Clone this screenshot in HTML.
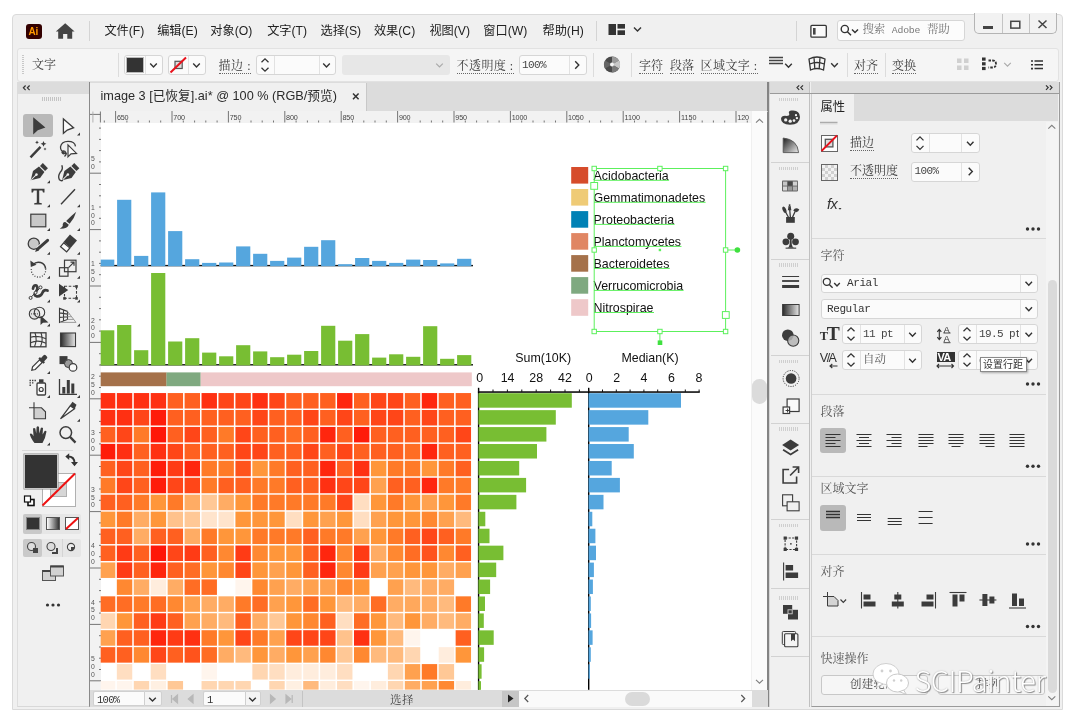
<!DOCTYPE html>
<html lang="zh-CN"><head><meta charset="utf-8"><title>image 3 [已恢复].ai* @ 100 % (RGB/预览)</title>
<style>
*{box-sizing:border-box;margin:0;padding:0}
html,body{width:1080px;height:727px;overflow:hidden;background:#fff}
body{position:relative;font-family:"Liberation Sans","Noto Sans CJK SC",sans-serif;color:#333;font-size:13px}
.a{position:absolute}
.win{left:12px;top:14px;width:1051px;height:696px;background:#f0f0f0;border:1px solid #dadada;border-radius:4px 4px 0 0}
.t{position:absolute;white-space:nowrap;line-height:1}
.ui{font-family:"Liberation Sans","Noto Sans CJK SC",sans-serif;color:#2c2c2c}
.sf{font-family:"Liberation Serif","Noto Serif CJK SC",serif;color:#3a3a3a}
.mono{font-family:"Liberation Mono","Noto Serif CJK SC",monospace;color:#3a3a3a}
.ar{font-family:"Liberation Sans",sans-serif;color:#1a1a1a}
.box{position:absolute;background:#fbfbfb;border:1px solid #d6d6d6;border-radius:3px}
.vsep{position:absolute;width:1px;background:#d4d4d4}
.hsep{position:absolute;height:1px;background:#d9d9d9}
.ul{border-bottom:1px dotted #666}
svg{position:absolute;overflow:visible}
.dots{position:absolute;color:#333;font-size:9px;letter-spacing:1px;line-height:1}
</style></head><body>
<div class="a" style="left:0;top:0;width:1080px;height:727px;will-change:transform">
<div class="a win"></div>

<div class="a" style="left:26px;top:24px;width:16px;height:15px;background:#300;border-radius:3px"></div>
<div class="t ar" style="left:28.5px;top:26.5px;font-size:10px;color:#ff9a00;font-weight:bold;letter-spacing:-0.3px">Ai</div>
<svg style="left:0;top:0;" width="1" height="1"><path d="M65.2 23.2 L74.6 31.6 L72.2 31.6 L72.2 38.8 L67.3 38.8 L67.3 34 L63.1 34 L63.1 38.8 L58.2 38.8 L58.2 31.6 L55.8 31.6 Z" fill="#444"/></svg>
<div class="vsep" style="left:89px;top:21px;height:20px;background:#d4d4d4"></div>
<div class="t ui" style="left:104.4px;top:24.6px;font-size:12.2px;color:#222">文件(F)</div>
<div class="t ui" style="left:157.2px;top:24.6px;font-size:12.2px;color:#222">编辑(E)</div>
<div class="t ui" style="left:210.3px;top:24.6px;font-size:12.2px;color:#222">对象(O)</div>
<div class="t ui" style="left:267.2px;top:24.6px;font-size:12.2px;color:#222">文字(T)</div>
<div class="t ui" style="left:320.5px;top:24.6px;font-size:12.2px;color:#222">选择(S)</div>
<div class="t ui" style="left:373.9px;top:24.6px;font-size:12.2px;color:#222">效果(C)</div>
<div class="t ui" style="left:429.4px;top:24.6px;font-size:12.2px;color:#222">视图(V)</div>
<div class="t ui" style="left:483.3px;top:24.6px;font-size:12.2px;color:#222">窗口(W)</div>
<div class="t ui" style="left:542.5px;top:24.6px;font-size:12.2px;color:#222">帮助(H)</div>
<div class="vsep" style="left:596px;top:21px;height:20px;background:#d4d4d4"></div>
<svg style="left:0;top:0;" width="1" height="1"><rect x="608.5" y="24" width="7.5" height="11" fill="#333"/><rect x="617.5" y="24" width="7.5" height="4.6" fill="#333"/><rect x="617.5" y="30.3" width="7.5" height="4.7" fill="#333"/></svg>
<svg style="left:0;top:0" width="1" height="1"><path d="M634.0 27.5 L637.5 31.1 L641.0 27.5" fill="none" stroke="#333" stroke-width="1.4"/></svg>
<div class="vsep" style="left:796px;top:21px;height:20px;background:#d4d4d4"></div>
<svg style="left:0;top:0;" width="1" height="1"><rect x="810.9" y="25.4" width="15.4" height="11.8" rx="1" fill="#fafafa" stroke="#333" stroke-width="1.3"/><rect x="813" y="28" width="2.6" height="6.6" fill="#444"/></svg>
<div class="box" style="left:836.5px;top:20px;width:128.5px;height:20.5px;background:#fcfcfc"></div>
<svg style="left:0;top:0;" width="1" height="1"><circle cx="844.8" cy="29" r="3.6" fill="none" stroke="#333" stroke-width="1.4"/><path d="M847.4 31.8 L851 35.3" stroke="#333" stroke-width="1.5"/></svg>
<svg style="left:0;top:0" width="1" height="1"><path d="M852.0 29.4 L855.0 32.6 L858.0 29.4" fill="none" stroke="#333" stroke-width="1.4"/></svg>
<div class="t mono" style="left:862.5px;top:23.5px;font-size:11.5px;color:#777;letter-spacing:-0.2px">搜索 <span style="font-size:9.8px">Adobe</span> 帮助</div>
<div class="a" style="left:974px;top:13px;width:83px;height:21px;border:1px solid #b4b4b4;border-top:none;border-radius:0 0 5px 5px;background:#f2f2f2"></div>
<div class="vsep" style="left:1001.5px;top:14px;height:19px;background:#c4c4c4"></div>
<div class="vsep" style="left:1028.5px;top:14px;height:19px;background:#c4c4c4"></div>
<div class="a" style="left:983px;top:26px;width:10px;height:2.5px;background:#444;"></div>
<svg style="left:0;top:0;" width="1" height="1"><rect x="1010.8" y="21.3" width="9" height="6.8" fill="none" stroke="#444" stroke-width="1.5"/></svg>
<svg style="left:0;top:0;" width="1" height="1"><path d="M1038.5 20.5 L1046.5 28 M1046.5 20.5 L1038.5 28" stroke="#444" stroke-width="1.5"/></svg>
<div class="a" style="left:17px;top:48px;width:1042px;height:34px;background:#f5f5f5;border:1px solid #e2e2e2;border-radius:3px"></div>
<div class="a" style="left:22px;top:55px;width:2px;height:19px;background:repeating-linear-gradient(#c8c8c8 0 1px,transparent 1px 2px)"></div>
<div class="t sf" style="left:32px;top:59px;font-size:12px;color:#444">文字</div>
<div class="vsep" style="left:118px;top:53px;height:24px;background:#dcdcdc"></div>
<div class="box" style="left:124px;top:55px;width:39px;height:20px;"></div>
<div class="a" style="left:126px;top:57px;width:17.5px;height:16px;background:#333;border:1px solid #bbb"></div>
<div class="vsep" style="left:144.5px;top:56px;height:18px;background:#e2e2e2"></div>
<svg style="left:0;top:0" width="1" height="1"><path d="M150.2 63.6 L153.5 67.0 L156.8 63.6" fill="none" stroke="#333" stroke-width="1.4"/></svg>
<div class="box" style="left:167.5px;top:55px;width:38.5px;height:20px;"></div>
<svg style="left:0;top:0;" width="1" height="1"><rect x="175" y="61.3" width="7.2" height="7.2" fill="#ddd" stroke="#555" stroke-width="1.2"/><path d="M170.5 72.5 L186 57.5" stroke="#e8121c" stroke-width="2"/></svg>
<div class="vsep" style="left:187.5px;top:56px;height:18px;background:#e2e2e2"></div>
<svg style="left:0;top:0" width="1" height="1"><path d="M193.2 63.6 L196.5 67.0 L199.8 63.6" fill="none" stroke="#333" stroke-width="1.4"/></svg>
<div class="t sf" style="left:218.5px;top:59.7px;font-size:12px;letter-spacing:0.6px"><span class="ul">描边 :</span></div>
<div class="box" style="left:256px;top:55px;width:80px;height:20px;"></div>
<div class="vsep" style="left:273.5px;top:56px;height:18px;background:#e2e2e2"></div>
<div class="vsep" style="left:318.5px;top:56px;height:18px;background:#e2e2e2"></div>
<svg style="left:0;top:0" width="1" height="1"><path d="M261.5 62.2 L265.0 58.8 L268.5 62.2" fill="none" stroke="#333" stroke-width="1.3"/></svg><svg style="left:0;top:0" width="1" height="1"><path d="M261.5 67.8 L265.0 71.2 L268.5 67.8" fill="none" stroke="#333" stroke-width="1.3"/></svg>
<svg style="left:0;top:0" width="1" height="1"><path d="M323.2 63.6 L326.5 67.0 L329.8 63.6" fill="none" stroke="#333" stroke-width="1.4"/></svg>
<div class="a" style="left:341.5px;top:55px;width:108px;height:20px;background:#e7e7e7;border-radius:3px"></div>
<svg style="left:0;top:0" width="1" height="1"><path d="M436.2 63.6 L439.5 67.0 L442.8 63.6" fill="none" stroke="#aaa" stroke-width="1.2"/></svg>
<div class="t sf" style="left:456.5px;top:59.7px;font-size:12px;letter-spacing:0.45px"><span class="ul">不透明度 :</span></div>
<div class="box" style="left:518.5px;top:55px;width:68px;height:20px;"></div>
<div class="vsep" style="left:568.5px;top:56px;height:18px;background:#e2e2e2"></div>
<div class="t mono" style="left:522px;top:60px;font-size:11px;letter-spacing:-0.6px;color:#444">100%</div>
<svg style="left:0;top:0" width="1" height="1"><path d="M575.2 61.2 L578.8 65.0 L575.2 68.8" fill="none" stroke="#333" stroke-width="1.4"/></svg>
<div class="vsep" style="left:593px;top:53px;height:24px;background:#dcdcdc"></div>
<svg style="left:0;top:0;" width="1" height="1"><circle cx="612" cy="64.5" r="8" fill="#4a4a4a"/><path d="M612 64.5 L612 56.5 A8 8 0 0 1 618.9 60.5 Z" fill="#9a9a9a"/><path d="M612 64.5 L618.9 60.5 A8 8 0 0 1 618.9 68.5 Z" fill="#c8c8c8"/><path d="M612 64.5 L618.9 68.5 A8 8 0 0 1 612 72.5 Z" fill="#7a7a7a"/><path d="M612 64.5 L605.1 68.5 A8 8 0 0 1 605.1 60.5 Z" fill="#666"/><circle cx="612" cy="64.5" r="2" fill="#f5f5f5"/></svg>
<div class="vsep" style="left:631px;top:53px;height:24px;background:#dcdcdc"></div>
<div class="t sf" style="left:639px;top:59.7px;font-size:12px;"><span class="ul">字符</span></div>
<div class="t sf" style="left:670px;top:59.7px;font-size:12px;"><span class="ul">段落</span></div>
<div class="t sf" style="left:700.5px;top:59.7px;font-size:12px;letter-spacing:0.45px"><span class="ul">区域文字 :</span></div>
<svg style="left:0;top:0;" width="1" height="1"><path d="M769 57.5 H783 M769 60.5 H783 M769 63.5 H783" stroke="#444" stroke-width="1.3"/></svg>
<svg style="left:0;top:0" width="1" height="1"><path d="M785.2 63.8 L788.5 67.2 L791.8 63.8" fill="none" stroke="#333" stroke-width="1.4"/></svg>
<svg style="left:0;top:0;" width="1" height="1"><path d="M809 59 Q817 55 825 59 L823.5 70 Q817 67 810.5 70 Z M814 57.3 L814.8 68.5 M820 57.3 L819.2 68.5 M809.8 64 Q817 61 824.2 64" fill="none" stroke="#333" stroke-width="1.3"/></svg>
<svg style="left:0;top:0" width="1" height="1"><path d="M831.2 63.3 L834.5 66.7 L837.8 63.3" fill="none" stroke="#333" stroke-width="1.4"/></svg>
<div class="vsep" style="left:846.5px;top:53px;height:24px;background:#dcdcdc"></div>
<div class="t sf" style="left:854px;top:59.7px;font-size:12px;"><span class="ul">对齐</span></div>
<div class="vsep" style="left:884.5px;top:53px;height:24px;background:#dcdcdc"></div>
<div class="t sf" style="left:892px;top:59.7px;font-size:12px;"><span class="ul">变换</span></div>
<svg style="left:0;top:0;" width="1" height="1"><rect x="957" y="58.5" width="4.5" height="4.5" fill="#d0d0d0"/><rect x="964" y="58.5" width="4.5" height="4.5" fill="#d0d0d0"/><rect x="957" y="65.5" width="4.5" height="4.5" fill="#d0d0d0"/><rect x="964" y="65.5" width="4.5" height="4.5" fill="#d0d0d0"/></svg>
<svg style="left:0;top:0;" width="1" height="1"><rect x="982" y="57.5" width="3.6" height="3.2" fill="#333"/><rect x="982" y="62.2" width="3.6" height="3.2" fill="#333"/><rect x="982" y="66.9" width="3.6" height="3.2" fill="#333"/><path d="M988.5 60.5 H992.5 Q996 60.5 996 64 Q996 67.5 992.5 67.5 H988.5" fill="none" stroke="#333" stroke-width="1.8" stroke-dasharray="2.5 1.2"/></svg>
<svg style="left:0;top:0" width="1" height="1"><path d="M1004.2 62.8 L1007.5 66.2 L1010.8 62.8" fill="none" stroke="#aaa" stroke-width="1.1"/></svg>
<svg style="left:0;top:0;" width="1" height="1"><path d="M1034.5 61 H1043 M1034.5 64.8 H1043 M1034.5 68.6 H1043" stroke="#333" stroke-width="1.5"/><path d="M1031 61 H1033 M1031 64.8 H1033 M1031 68.6 H1033" stroke="#333" stroke-width="1.6"/></svg>
<div class="a" style="left:17px;top:82px;width:71.5px;height:624.5px;background:#f0f0f0;border-left:1px solid #dedede;border-bottom:1px solid #d8d8d8"></div>
<div class="a" style="left:17px;top:82px;width:71.5px;height:12px;background:#dcdcdc;"></div>
<svg style="left:0;top:0;" width="1" height="1"><path d="M25.6 85.5 L23.4 87.8 L25.6 90.1 M29.6 85.5 L27.4 87.8 L29.6 90.1" fill="none" stroke="#333" stroke-width="1.2"/></svg>
<div class="a" style="left:42px;top:97px;width:19px;height:4px;background:repeating-linear-gradient(90deg,#c4c4c4 0 1px,transparent 1px 2px)"></div>
<div class="a" style="left:23px;top:113.5px;width:29.5px;height:23.5px;background:#b9b9b9;border-radius:3px"></div>
<svg style="left:0;top:0;" width="1" height="1"><path d="M33.2 117.3 L33.2 134.5 L37.8 130.29999999999998 L45.4 127.39999999999999 Z" fill="#3c3c3c"/><path d="M63.4 118.89999999999999 L63.4 133.29999999999998 L67.3 130.1 L73.6 127.69999999999999 Z" fill="#fafafa" stroke="#3c3c3c" stroke-width="1.3" stroke-linejoin="miter"/><path d="M80 132.6 L80 135.6 L77 135.6 Z" fill="#3c3c3c"/><path d="M30.5 157.4 L40.5 146.9" stroke="#3c3c3c" stroke-width="2.4"/><path d="M43.5 140.9 l0.9 2 2 0.9 -2 0.9 -0.9 2 -0.9 -2 -2 -0.9 2 -0.9z M37 140.4 l0.6 1.3 1.3 0.6 -1.3 0.6 -0.6 1.3 -0.6 -1.3 -1.3 -0.6 1.3 -0.6z M45 147.4 l0.5 1 1 0.5 -1 0.5 -0.5 1 -0.5 -1 -1 -0.5 1 -0.5z" fill="#3c3c3c"/><path d="M67 153.9 Q60 151.9 60.5 146.9 Q61.5 141.4 68 141.4 Q75 141.4 75.5 146.4 M64.5 156.4 Q67.5 153.9 65 151.4 Q62.5 149.9 62 152.4 Q62.5 154.4 65 153.4" fill="none" stroke="#3c3c3c" stroke-width="1.3"/><path d="M68 144.9 L68 156.9 L71 153.9 L76.5 153.4 Z" fill="#fafafa" stroke="#3c3c3c" stroke-width="1.2"/><g transform="translate(37.6 173.4) rotate(45)"><path d="M-3.6 -11 H3.6 V-7 H-3.6 Z" fill="#3c3c3c"/><path d="M-3.8 -5.8 H3.8 L5 1.5 L0 9.8 L-5 1.5 Z" fill="#3c3c3c"/><path d="M0 9 V2.5" stroke="#f0f0f0" stroke-width="1"/><circle cx="0" cy="1.6" r="1.3" fill="#f0f0f0"/></g><path d="M50 180.3 L50 183.3 L47 183.3 Z" fill="#3c3c3c"/><g transform="translate(69 173.4) rotate(45)"><path d="M-3.6 -11 H3.6 V-7 H-3.6 Z" fill="#3c3c3c"/><path d="M-3.8 -5.8 H3.8 L5 1.5 L0 9.8 L-5 1.5 Z" fill="#3c3c3c"/><path d="M0 9 V2.5" stroke="#f0f0f0" stroke-width="1"/><circle cx="0" cy="1.6" r="1.3" fill="#f0f0f0"/></g><path d="M61.8 165.3 Q63.5 169.3 60.2 172.3 Q57.5 176.3 59.5 179.8 Q61 181.3 63 180.3" fill="none" stroke="#3c3c3c" stroke-width="1.4"/><path d="M31.5 188.7 H44.5 V192.5 H43 L42.3 190.39999999999998 H39.2 V202.7 L41.8 203.29999999999998 V204.5 H34.2 V203.29999999999998 L36.8 202.7 V190.39999999999998 H33.7 L33 192.5 H31.5 Z" fill="#3c3c3c"/><path d="M50 204.2 L50 207.2 L47 207.2 Z" fill="#3c3c3c"/><path d="M61 204.2 L75 189.2" stroke="#3c3c3c" stroke-width="1.4"/><path d="M80 204.2 L80 207.2 L77 207.2 Z" fill="#3c3c3c"/><rect x="30.8" y="214.2" width="15" height="12.6" fill="#c8c8c8" stroke="#3c3c3c" stroke-width="1.2"/><path d="M50 228.0 L50 231.0 L47 231.0 Z" fill="#3c3c3c"/><path d="M76.2 211.7 Q70.5 216.3 66.2 221.1 L69.6 223.8 Q74.6 218.0 76.2 211.7 Z" fill="#3c3c3c"/><path d="M65.3 222.0 L68.8 224.8 Q67.6 229.0 59.8 228.8 Q63.6 226.5 62.7 224.3 Q63.3 221.6 65.3 222.0 Z" fill="#3c3c3c"/><path d="M80 228.0 L80 231.0 L77 231.0 Z" fill="#3c3c3c"/><circle cx="33.8" cy="243.70000000000002" r="5.6" fill="#c8c8c8" stroke="#3c3c3c" stroke-width="1.3"/><path d="M47.6 240.3 L37.4 249.3" stroke="#f0f0f0" stroke-width="4.6"/><path d="M47.6 240.3 L37.6 249.10000000000002" stroke="#3c3c3c" stroke-width="3" stroke-linecap="round"/><path d="M36.4 247.60000000000002 L39 250.4 L35.2 251.9 Z" fill="#3c3c3c"/><path d="M50 251.8 L50 254.8 L47 254.8 Z" fill="#3c3c3c"/><g transform="translate(68.2 243.70000000000002) rotate(40)"><rect x="-4.6" y="-8.2" width="9.2" height="10" fill="#3c3c3c"/><rect x="-4" y="2.2" width="8" height="5" fill="#fafafa" stroke="#3c3c3c" stroke-width="1.2"/></g><path d="M80 251.8 L80 254.8 L77 254.8 Z" fill="#3c3c3c"/><path d="M33 264.7 A7.2 7.2 0 0 1 45.6 268.7" fill="none" stroke="#3c3c3c" stroke-width="1.5"/><path d="M45.6 268.7 A7.2 7.2 0 1 1 31.4 268.7" fill="none" stroke="#3c3c3c" stroke-width="1.2" stroke-dasharray="1 1.6"/><path d="M30.3 260.4 L30.8 267.0 L36.5 264.7 Z" fill="#3c3c3c"/><path d="M50 275.7 L50 278.7 L47 278.7 Z" fill="#3c3c3c"/><rect x="59.5" y="267.7" width="8.5" height="8.5" fill="none" stroke="#3c3c3c" stroke-width="1.2"/><rect x="64.5" y="260.2" width="11.5" height="11.5" fill="none" stroke="#3c3c3c" stroke-width="1.2"/><path d="M68.5 267.7 L73.5 262.7 M70.5 262.2 H74 V265.7" fill="none" stroke="#3c3c3c" stroke-width="1.2"/><path d="M80 275.7 L80 278.7 L77 278.7 Z" fill="#3c3c3c"/><path d="M30.6 297.70000000000005 L40.4 287.5" stroke="#3c3c3c" stroke-width="1" fill="none"/><path d="M33 288.6 Q33.5 284.6 36.5 285.6 Q38.5 288.1 36 291.6 Q33 295.1 36.5 296.3 Q41 296.90000000000003 42.5 292.6 Q44 289.1 47.5 290.6" fill="none" stroke="#3c3c3c" stroke-width="2.7" stroke-linecap="round"/><circle cx="30.6" cy="297.90000000000003" r="1.5" fill="#f0f0f0" stroke="#3c3c3c" stroke-width="1"/><circle cx="40.5" cy="287.40000000000003" r="1.5" fill="#f0f0f0" stroke="#3c3c3c" stroke-width="1"/><circle cx="35.6" cy="292.70000000000005" r="1.4" fill="#f0f0f0" stroke="#3c3c3c" stroke-width="0.9"/><path d="M50 299.6 L50 302.6 L47 302.6 Z" fill="#3c3c3c"/><rect x="64.5" y="286.3" width="12" height="12" fill="none" stroke="#3c3c3c" stroke-width="1.1" stroke-dasharray="2.6 1.6"/><rect x="75.2" y="285.1" width="2.6" height="2.6" fill="#3c3c3c"/><rect x="75.2" y="297.1" width="2.6" height="2.6" fill="#3c3c3c"/><rect x="63.2" y="297.1" width="2.6" height="2.6" fill="#3c3c3c"/><path d="M59 283.70000000000005 L59 296.5 L68.2 290.1 Z" fill="#3c3c3c"/><path d="M80 299.6 L80 302.6 L77 302.6 Z" fill="#3c3c3c"/><circle cx="34.5" cy="313.9" r="5.2" fill="#e2e2e2" stroke="#3c3c3c" stroke-width="1.1"/><circle cx="39.5" cy="312.4" r="5.2" fill="none" stroke="#3c3c3c" stroke-width="1.1"/><path d="M31 313.9 H38" stroke="#3c3c3c" stroke-width="1" stroke-dasharray="1 1"/><path d="M40.5 315.4 L40.5 324.9 L43 322.7 L48.5 322.4 Z" fill="#3c3c3c"/><path d="M50 323.4 L50 326.4 L47 326.4 Z" fill="#3c3c3c"/><path d="M59.5 308.4 V322.4 L67.5 319.4 V311.4 Z M59.5 312.9 L67.5 314.09999999999997 M59.5 317.4 L67.5 316.7 M63.5 309.9 V320.9" fill="none" stroke="#3c3c3c" stroke-width="1.1"/><path d="M67.5 311.4 L76 322.4 M67.5 319.4 H74 M67.5 316.7 H72 M67.5 314.09999999999997 H70 M60 322.4 H76" fill="none" stroke="#9a9a9a" stroke-width="1"/><path d="M80 323.4 L80 326.4 L77 326.4 Z" fill="#3c3c3c"/><rect x="30.5" y="332.8" width="15.5" height="14" fill="none" stroke="#3c3c3c" stroke-width="1.3"/><path d="M30.5 337.3 Q38 334.8 46 338.8 M30.5 342.8 Q38 339.3 46 343.3 M35 332.8 Q37.5 339.8 34.5 346.8 M41 332.8 Q43.5 339.8 40.5 346.8" fill="none" stroke="#3c3c3c" stroke-width="1.1"/><defs><linearGradient id="tg1" x1="0" x2="1"><stop offset="0" stop-color="#2a2a2a"/><stop offset="1" stop-color="#e8e8e8"/></linearGradient></defs><rect x="60.5" y="333.0" width="15" height="13.6" fill="url(#tg1)" stroke="#3c3c3c" stroke-width="1.1"/><g transform="translate(38.5 363.6) rotate(45)"><rect x="-2.3" y="-11" width="4.6" height="6" rx="1.5" fill="#3c3c3c"/><rect x="-3.6" y="-5.6" width="7.2" height="2.2" fill="#3c3c3c"/><path d="M-1.9 -3.4 V6.5 L0 9.5 L1.9 6.5 V-3.4 Z" fill="#fafafa" stroke="#3c3c3c" stroke-width="1.2"/></g><path d="M50 371.1 L50 374.1 L47 374.1 Z" fill="#3c3c3c"/><rect x="59.5" y="356.1" width="8" height="8" fill="#3c3c3c"/><circle cx="68.5" cy="363.6" r="4" fill="#9a9a9a" stroke="#3c3c3c" stroke-width="1"/><circle cx="73" cy="367.40000000000003" r="3.8" fill="#fafafa" stroke="#3c3c3c" stroke-width="1.2"/><rect x="37" y="383.0" width="8.5" height="12" rx="1" fill="#fafafa" stroke="#3c3c3c" stroke-width="1.3"/><rect x="39" y="379.3" width="4.5" height="3.4" fill="#3c3c3c"/><circle cx="41.2" cy="389.5" r="2" fill="none" stroke="#3c3c3c" stroke-width="1.2"/><path d="M29.5 380.5 h1.4 M32 380.5 h1.4 M34.5 380.5 h1.4 M29.5 382.9 h1.4 M32 382.9 h1.4 M29.5 385.3 h1.4" stroke="#3c3c3c" stroke-width="1.4"/><path d="M50 395.0 L50 398.0 L47 398.0 Z" fill="#3c3c3c"/><path d="M59.5 379.0 V394.3 H77" fill="none" stroke="#3c3c3c" stroke-width="1.3"/><rect x="62.3" y="387.0" width="3" height="6.6" fill="#3c3c3c"/><rect x="66.8" y="380.0" width="3" height="13.6" fill="#3c3c3c"/><rect x="71.3" y="383.5" width="3" height="10.1" fill="#3c3c3c"/><path d="M80 395.0 L80 398.0 L77 398.0 Z" fill="#3c3c3c"/><path d="M34 407.8 H41.5 L45.5 411.8 V418.8 H34 Z" fill="#d0d0d0" stroke="#3c3c3c" stroke-width="1.1"/><path d="M29 407.8 H34 M34 402.3 V407.8" stroke="#3c3c3c" stroke-width="1.1"/><path d="M60.5 418.8 L70.2 405.8 L74.5 408.8 Z" fill="#fafafa" stroke="#3c3c3c" stroke-width="1.3"/><path d="M69.8 405.5 L72.5 401.8 L76.5 404.8 L74.6 408.90000000000003 Z" fill="#3c3c3c"/><path d="M80 418.8 L80 421.8 L77 421.8 Z" fill="#3c3c3c"/><path d="M34.5 443.1 Q30.5 438.1 29.8 434.1 Q31 432.90000000000003 32.5 434.6 L33.5 436.3 L33 428.6 Q34.2 427.3 35.3 428.6 L36.2 433.6 L36.6 426.90000000000003 Q37.9 425.6 39 426.90000000000003 L39.4 433.6 L40.8 427.90000000000003 Q42 426.90000000000003 43 428.1 L42.6 434.6 L44.6 430.90000000000003 Q45.8 430.3 46.5 431.5 Q45.5 438.1 42.5 443.1 Z" fill="#3c3c3c"/><path d="M50 442.6 L50 445.6 L47 445.6 Z" fill="#3c3c3c"/><circle cx="65.8" cy="432.6" r="5.8" fill="none" stroke="#3c3c3c" stroke-width="1.5"/><path d="M70 436.90000000000003 L75.5 442.6" stroke="#3c3c3c" stroke-width="2.3"/></svg>
<div class="hsep" style="left:22px;top:449.5px;width:51px;background:#dadada"></div>
<div class="a" style="left:41.5px;top:472.5px;width:34.5px;height:34px;background:#fff;border:1px solid #b0b0b0"></div>
<div class="a" style="left:50px;top:481.5px;width:16.5px;height:15.5px;background:#d6d6d6;border:1px solid #b0b0b0"></div>
<svg style="left:0;top:0;" width="1" height="1"><path d="M42.5 505.5 L75 473.5" stroke="#ee1111" stroke-width="2"/></svg>
<div class="a" style="left:23.5px;top:454px;width:34.5px;height:35px;background:#333;border:1px solid #c8c8c8;box-shadow:0 0 0 0.5px #888"></div>
<svg style="left:0;top:0;" width="1" height="1"><path d="M68 456.5 Q74.5 456.5 74.5 463" fill="none" stroke="#333" stroke-width="1.8"/><path d="M69.2 453.2 L65.3 456.6 L69.2 460 Z M71 462 L74.5 466.2 L78 462 Z" fill="#333"/></svg>
<svg style="left:0;top:0;" width="1" height="1"><rect x="28" y="499.5" width="6" height="6" fill="#fff" stroke="#111" stroke-width="1.6"/><rect x="24.5" y="496" width="6" height="6" fill="#fff" stroke="#111" stroke-width="1.2"/></svg>
<div class="a" style="left:23px;top:513.5px;width:57.5px;height:20px;background:#e6e6e6;border-radius:2px"></div>
<div class="a" style="left:23px;top:513.5px;width:19px;height:20px;background:#c9c9c9;border-radius:2px"></div>
<div class="a" style="left:26px;top:517px;width:14px;height:13px;background:#333;border:1px solid #888"></div>
<div class="a" style="left:45.5px;top:517px;width:14px;height:13px;background:linear-gradient(90deg,#fff,#333);border:1px solid #555"></div>
<div class="a" style="left:65px;top:517px;width:14px;height:13px;background:#fff;border:1px solid #555"></div>
<svg style="left:0;top:0;" width="1" height="1"><path d="M66 529 L78 518" stroke="#ee1111" stroke-width="2"/></svg>
<div class="a" style="left:23px;top:538.5px;width:57.5px;height:18.5px;background:#e6e6e6;border-radius:2px"></div>
<div class="a" style="left:23px;top:538.5px;width:19px;height:18.5px;background:#c9c9c9;border-radius:2px"></div>
<div class="vsep" style="left:61.5px;top:539px;height:17.5px;background:#d4d4d4"></div>
<svg style="left:0;top:0;" width="1" height="1"><circle cx="31.5" cy="546.5" r="4" fill="#ddd" stroke="#444" stroke-width="1.1"/><rect x="33" y="548" width="5" height="5" fill="#444"/><circle cx="51" cy="546.5" r="4" fill="#ddd" stroke="#444" stroke-width="1.1"/><path d="M52 553 H57 V548" fill="none" stroke="#444" stroke-width="2"/><circle cx="71" cy="547" r="3.6" fill="#eee" stroke="#444" stroke-width="1.1"/><path d="M71 547 h3.4 a3.4 3.4 0 0 1 -3.4 3.4z" fill="#444"/></svg>
<svg style="left:0;top:0;" width="1" height="1"><rect x="42.5" y="570.5" width="13" height="10" fill="#d2d2d2" stroke="#555" stroke-width="1"/><rect x="42.5" y="570" width="13" height="2" fill="#444"/><rect x="50.5" y="566" width="13" height="10" fill="#d2d2d2" stroke="#555" stroke-width="1"/><rect x="50.5" y="565.5" width="13" height="2" fill="#444"/></svg>
<svg style="left:0;top:0;" width="1" height="1"><circle cx="47.5" cy="605" r="1.6" fill="#333"/><circle cx="53" cy="605" r="1.6" fill="#333"/><circle cx="58.5" cy="605" r="1.6" fill="#333"/></svg>
<div class="a" style="left:88.5px;top:82px;width:680.5px;height:625px;background:#dcdcdc;border-left:1.5px solid #8a8a8a;border-right:2px solid #848484;border-bottom:1px solid #b4b4b4"></div>
<div class="a" style="left:90px;top:83px;width:276.5px;height:28px;background:#f0f0f0;border-right:1px solid #c8c8c8"></div>
<div class="t ui" style="left:100.5px;top:89.5px;font-size:12.7px;color:#2a2a2a">image 3 [已恢复].ai* @ 100 % (RGB/预览)</div>
<svg style="left:0;top:0;" width="1" height="1"><path d="M353 93.5 L358.6 99.2 M358.6 93.5 L353 99.2" stroke="#333" stroke-width="1.5"/></svg>
<div class="hsep" style="left:90px;top:110.5px;width:678px;background:#c4c4c4"></div>
<div class="a" style="left:90px;top:111px;width:662px;height:11.8px;background:#f2f2f2;"></div>
<div class="a" style="left:90px;top:111px;width:11px;height:579.5px;background:#f2f2f2;"></div>
<div class="a" style="left:101px;top:122.5px;width:651px;height:567.5px;background:#fff;"></div>
<svg style="left:0;top:0;" width="1" height="1"><path d="M90 114.4 H100.4 M100.4 111.5 V122.5" stroke="#666" stroke-width="0.9" fill="none"/><path d="M92.9 111.5 V122.5" stroke="#aaa" stroke-width="0.9" fill="none"/><path d="M104.3 120.5 V122.5" stroke="#555" stroke-width="0.8"/><path d="M115.6 111 V122.5" stroke="#555" stroke-width="0.8"/><path d="M126.9 120.5 V122.5" stroke="#555" stroke-width="0.8"/><path d="M138.2 120.5 V122.5" stroke="#555" stroke-width="0.8"/><path d="M149.4 120.5 V122.5" stroke="#555" stroke-width="0.8"/><path d="M160.7 120.5 V122.5" stroke="#555" stroke-width="0.8"/><path d="M172.0 111 V122.5" stroke="#555" stroke-width="0.8"/><path d="M183.3 120.5 V122.5" stroke="#555" stroke-width="0.8"/><path d="M194.6 120.5 V122.5" stroke="#555" stroke-width="0.8"/><path d="M205.8 120.5 V122.5" stroke="#555" stroke-width="0.8"/><path d="M217.1 120.5 V122.5" stroke="#555" stroke-width="0.8"/><path d="M228.4 111 V122.5" stroke="#555" stroke-width="0.8"/><path d="M239.7 120.5 V122.5" stroke="#555" stroke-width="0.8"/><path d="M251.0 120.5 V122.5" stroke="#555" stroke-width="0.8"/><path d="M262.2 120.5 V122.5" stroke="#555" stroke-width="0.8"/><path d="M273.5 120.5 V122.5" stroke="#555" stroke-width="0.8"/><path d="M284.8 111 V122.5" stroke="#555" stroke-width="0.8"/><path d="M296.1 120.5 V122.5" stroke="#555" stroke-width="0.8"/><path d="M307.4 120.5 V122.5" stroke="#555" stroke-width="0.8"/><path d="M318.6 120.5 V122.5" stroke="#555" stroke-width="0.8"/><path d="M329.9 120.5 V122.5" stroke="#555" stroke-width="0.8"/><path d="M341.2 111 V122.5" stroke="#555" stroke-width="0.8"/><path d="M352.5 120.5 V122.5" stroke="#555" stroke-width="0.8"/><path d="M363.8 120.5 V122.5" stroke="#555" stroke-width="0.8"/><path d="M375.0 120.5 V122.5" stroke="#555" stroke-width="0.8"/><path d="M386.3 120.5 V122.5" stroke="#555" stroke-width="0.8"/><path d="M397.6 111 V122.5" stroke="#555" stroke-width="0.8"/><path d="M408.9 120.5 V122.5" stroke="#555" stroke-width="0.8"/><path d="M420.2 120.5 V122.5" stroke="#555" stroke-width="0.8"/><path d="M431.4 120.5 V122.5" stroke="#555" stroke-width="0.8"/><path d="M442.7 120.5 V122.5" stroke="#555" stroke-width="0.8"/><path d="M454.0 111 V122.5" stroke="#555" stroke-width="0.8"/><path d="M465.3 120.5 V122.5" stroke="#555" stroke-width="0.8"/><path d="M476.6 120.5 V122.5" stroke="#555" stroke-width="0.8"/><path d="M487.8 120.5 V122.5" stroke="#555" stroke-width="0.8"/><path d="M499.1 120.5 V122.5" stroke="#555" stroke-width="0.8"/><path d="M510.4 111 V122.5" stroke="#555" stroke-width="0.8"/><path d="M521.7 120.5 V122.5" stroke="#555" stroke-width="0.8"/><path d="M533.0 120.5 V122.5" stroke="#555" stroke-width="0.8"/><path d="M544.2 120.5 V122.5" stroke="#555" stroke-width="0.8"/><path d="M555.5 120.5 V122.5" stroke="#555" stroke-width="0.8"/><path d="M566.8 111 V122.5" stroke="#555" stroke-width="0.8"/><path d="M578.1 120.5 V122.5" stroke="#555" stroke-width="0.8"/><path d="M589.4 120.5 V122.5" stroke="#555" stroke-width="0.8"/><path d="M600.6 120.5 V122.5" stroke="#555" stroke-width="0.8"/><path d="M611.9 120.5 V122.5" stroke="#555" stroke-width="0.8"/><path d="M623.2 111 V122.5" stroke="#555" stroke-width="0.8"/><path d="M634.5 120.5 V122.5" stroke="#555" stroke-width="0.8"/><path d="M645.8 120.5 V122.5" stroke="#555" stroke-width="0.8"/><path d="M657.0 120.5 V122.5" stroke="#555" stroke-width="0.8"/><path d="M668.3 120.5 V122.5" stroke="#555" stroke-width="0.8"/><path d="M679.6 111 V122.5" stroke="#555" stroke-width="0.8"/><path d="M690.9 120.5 V122.5" stroke="#555" stroke-width="0.8"/><path d="M702.2 120.5 V122.5" stroke="#555" stroke-width="0.8"/><path d="M713.4 120.5 V122.5" stroke="#555" stroke-width="0.8"/><path d="M724.7 120.5 V122.5" stroke="#555" stroke-width="0.8"/><path d="M736.0 111 V122.5" stroke="#555" stroke-width="0.8"/><path d="M747.3 120.5 V122.5" stroke="#555" stroke-width="0.8"/><text x="116.9" y="120" font-family="Liberation Sans, sans-serif" font-size="7.2" fill="#444" textLength="11.7">650</text><text x="173.3" y="120" font-family="Liberation Sans, sans-serif" font-size="7.2" fill="#444" textLength="11.7">700</text><text x="229.7" y="120" font-family="Liberation Sans, sans-serif" font-size="7.2" fill="#444" textLength="11.7">750</text><text x="286.1" y="120" font-family="Liberation Sans, sans-serif" font-size="7.2" fill="#444" textLength="11.7">800</text><text x="342.5" y="120" font-family="Liberation Sans, sans-serif" font-size="7.2" fill="#444" textLength="11.7">850</text><text x="398.9" y="120" font-family="Liberation Sans, sans-serif" font-size="7.2" fill="#444" textLength="11.7">900</text><text x="455.3" y="120" font-family="Liberation Sans, sans-serif" font-size="7.2" fill="#444" textLength="11.7">950</text><text x="511.7" y="120" font-family="Liberation Sans, sans-serif" font-size="7.2" fill="#444" textLength="15.6">1000</text><text x="568.1" y="120" font-family="Liberation Sans, sans-serif" font-size="7.2" fill="#444" textLength="15.6">1050</text><text x="624.5" y="120" font-family="Liberation Sans, sans-serif" font-size="7.2" fill="#444" textLength="15.6">1100</text><text x="680.9" y="120" font-family="Liberation Sans, sans-serif" font-size="7.2" fill="#444" textLength="15.6">1150</text><text x="737.3" y="120" font-family="Liberation Sans, sans-serif" font-size="7.2" fill="#444" textLength="11.7">120</text><path d="M99 128.1 H101" stroke="#555" stroke-width="0.8"/><path d="M99 139.4 H101" stroke="#555" stroke-width="0.8"/><path d="M99 150.6 H101" stroke="#555" stroke-width="0.8"/><path d="M99 161.9 H101" stroke="#555" stroke-width="0.8"/><path d="M90 173.2 H101" stroke="#555" stroke-width="0.8"/><text x="91" y="161.2" font-family="Liberation Sans, sans-serif" font-size="6.8" fill="#555">5</text><text x="91" y="169.0" font-family="Liberation Sans, sans-serif" font-size="6.8" fill="#555">0</text><path d="M99 184.5 H101" stroke="#555" stroke-width="0.8"/><path d="M99 195.8 H101" stroke="#555" stroke-width="0.8"/><path d="M99 207.0 H101" stroke="#555" stroke-width="0.8"/><path d="M99 218.3 H101" stroke="#555" stroke-width="0.8"/><path d="M90 229.6 H101" stroke="#555" stroke-width="0.8"/><text x="91" y="209.8" font-family="Liberation Sans, sans-serif" font-size="6.8" fill="#555">1</text><text x="91" y="217.6" font-family="Liberation Sans, sans-serif" font-size="6.8" fill="#555">0</text><text x="91" y="225.4" font-family="Liberation Sans, sans-serif" font-size="6.8" fill="#555">0</text><path d="M99 240.9 H101" stroke="#555" stroke-width="0.8"/><path d="M99 252.2 H101" stroke="#555" stroke-width="0.8"/><path d="M99 263.4 H101" stroke="#555" stroke-width="0.8"/><path d="M99 274.7 H101" stroke="#555" stroke-width="0.8"/><path d="M90 286.0 H101" stroke="#555" stroke-width="0.8"/><text x="91" y="266.2" font-family="Liberation Sans, sans-serif" font-size="6.8" fill="#555">1</text><text x="91" y="274.0" font-family="Liberation Sans, sans-serif" font-size="6.8" fill="#555">5</text><text x="91" y="281.8" font-family="Liberation Sans, sans-serif" font-size="6.8" fill="#555">0</text><path d="M99 297.3 H101" stroke="#555" stroke-width="0.8"/><path d="M99 308.6 H101" stroke="#555" stroke-width="0.8"/><path d="M99 319.8 H101" stroke="#555" stroke-width="0.8"/><path d="M99 331.1 H101" stroke="#555" stroke-width="0.8"/><path d="M90 342.4 H101" stroke="#555" stroke-width="0.8"/><text x="91" y="322.6" font-family="Liberation Sans, sans-serif" font-size="6.8" fill="#555">2</text><text x="91" y="330.4" font-family="Liberation Sans, sans-serif" font-size="6.8" fill="#555">0</text><text x="91" y="338.2" font-family="Liberation Sans, sans-serif" font-size="6.8" fill="#555">0</text><path d="M99 353.7 H101" stroke="#555" stroke-width="0.8"/><path d="M99 365.0 H101" stroke="#555" stroke-width="0.8"/><path d="M99 376.2 H101" stroke="#555" stroke-width="0.8"/><path d="M99 387.5 H101" stroke="#555" stroke-width="0.8"/><path d="M90 398.8 H101" stroke="#555" stroke-width="0.8"/><text x="91" y="379.0" font-family="Liberation Sans, sans-serif" font-size="6.8" fill="#555">2</text><text x="91" y="386.8" font-family="Liberation Sans, sans-serif" font-size="6.8" fill="#555">5</text><text x="91" y="394.6" font-family="Liberation Sans, sans-serif" font-size="6.8" fill="#555">0</text><path d="M99 410.1 H101" stroke="#555" stroke-width="0.8"/><path d="M99 421.4 H101" stroke="#555" stroke-width="0.8"/><path d="M99 432.6 H101" stroke="#555" stroke-width="0.8"/><path d="M99 443.9 H101" stroke="#555" stroke-width="0.8"/><path d="M90 455.2 H101" stroke="#555" stroke-width="0.8"/><text x="91" y="435.4" font-family="Liberation Sans, sans-serif" font-size="6.8" fill="#555">3</text><text x="91" y="443.2" font-family="Liberation Sans, sans-serif" font-size="6.8" fill="#555">0</text><text x="91" y="451.0" font-family="Liberation Sans, sans-serif" font-size="6.8" fill="#555">0</text><path d="M99 466.5 H101" stroke="#555" stroke-width="0.8"/><path d="M99 477.8 H101" stroke="#555" stroke-width="0.8"/><path d="M99 489.0 H101" stroke="#555" stroke-width="0.8"/><path d="M99 500.3 H101" stroke="#555" stroke-width="0.8"/><path d="M90 511.6 H101" stroke="#555" stroke-width="0.8"/><text x="91" y="491.8" font-family="Liberation Sans, sans-serif" font-size="6.8" fill="#555">3</text><text x="91" y="499.6" font-family="Liberation Sans, sans-serif" font-size="6.8" fill="#555">5</text><text x="91" y="507.4" font-family="Liberation Sans, sans-serif" font-size="6.8" fill="#555">0</text><path d="M99 522.9 H101" stroke="#555" stroke-width="0.8"/><path d="M99 534.2 H101" stroke="#555" stroke-width="0.8"/><path d="M99 545.4 H101" stroke="#555" stroke-width="0.8"/><path d="M99 556.7 H101" stroke="#555" stroke-width="0.8"/><path d="M90 568.0 H101" stroke="#555" stroke-width="0.8"/><text x="91" y="548.2" font-family="Liberation Sans, sans-serif" font-size="6.8" fill="#555">4</text><text x="91" y="556.0" font-family="Liberation Sans, sans-serif" font-size="6.8" fill="#555">0</text><text x="91" y="563.8" font-family="Liberation Sans, sans-serif" font-size="6.8" fill="#555">0</text><path d="M99 579.3 H101" stroke="#555" stroke-width="0.8"/><path d="M99 590.6 H101" stroke="#555" stroke-width="0.8"/><path d="M99 601.8 H101" stroke="#555" stroke-width="0.8"/><path d="M99 613.1 H101" stroke="#555" stroke-width="0.8"/><path d="M90 624.4 H101" stroke="#555" stroke-width="0.8"/><text x="91" y="604.6" font-family="Liberation Sans, sans-serif" font-size="6.8" fill="#555">4</text><text x="91" y="612.4" font-family="Liberation Sans, sans-serif" font-size="6.8" fill="#555">5</text><text x="91" y="620.2" font-family="Liberation Sans, sans-serif" font-size="6.8" fill="#555">0</text><path d="M99 635.7 H101" stroke="#555" stroke-width="0.8"/><path d="M99 647.0 H101" stroke="#555" stroke-width="0.8"/><path d="M99 658.2 H101" stroke="#555" stroke-width="0.8"/><path d="M99 669.5 H101" stroke="#555" stroke-width="0.8"/><path d="M90 680.8 H101" stroke="#555" stroke-width="0.8"/><text x="91" y="661.0" font-family="Liberation Sans, sans-serif" font-size="6.8" fill="#555">5</text><text x="91" y="668.8" font-family="Liberation Sans, sans-serif" font-size="6.8" fill="#555">0</text><text x="91" y="676.6" font-family="Liberation Sans, sans-serif" font-size="6.8" fill="#555">0</text></svg>
<div class="a" style="left:751px;top:111px;width:16px;height:579px;background:#fbfbfb;border-left:1px solid #f0f0f0"></div>
<div class="a" style="left:752.2px;top:379.3px;width:14.6px;height:25px;background:#dbdbdb;border-radius:7.3px"></div>
<svg style="left:0;top:0" width="1" height="1"><path d="M756.0 122.7 L759.5 119.3 L763.0 122.7" fill="none" stroke="#808080" stroke-width="1.1"/></svg>
<svg style="left:0;top:0" width="1" height="1"><path d="M756.0 679.8 L759.5 683.2 L763.0 679.8" fill="none" stroke="#808080" stroke-width="1.1"/></svg>
<div class="a" style="left:90px;top:690px;width:678px;height:16.5px;background:#dcdcdc;"></div>
<div class="a" style="left:93px;top:691px;width:51px;height:15px;background:#fbfbfb;border:1px solid #d0d0d0;border-right:none;border-radius:2px 0 0 2px"></div>
<div class="a" style="left:144px;top:691px;width:17.5px;height:15px;background:#f4f4f4;border:1px solid #d0d0d0;border-radius:0 2px 2px 0"></div>
<div class="t mono" style="left:97px;top:694.5px;font-size:10.5px;letter-spacing:-0.7px;color:#333">100%</div>
<svg style="left:0;top:0" width="1" height="1"><path d="M149.2 697.7 L152.5 700.9 L155.8 697.7" fill="none" stroke="#333" stroke-width="1.4"/></svg>
<svg style="left:0;top:0;" width="1" height="1"><path d="M171.5 695 V703 M177.5 695 L172.8 699 L177.5 703 Z M193 695 L188.3 699 L193 703 Z" fill="#b8b8b8" stroke="#b8b8b8" stroke-width="1.2"/></svg>
<div class="a" style="left:203px;top:691px;width:41.5px;height:15px;background:#fbfbfb;border:1px solid #d0d0d0;border-right:none;border-radius:2px 0 0 2px"></div>
<div class="a" style="left:244.5px;top:691px;width:16px;height:15px;background:#f4f4f4;border:1px solid #d0d0d0;border-radius:0 2px 2px 0"></div>
<div class="t mono" style="left:207px;top:694.5px;font-size:10.5px;color:#333">1</div>
<svg style="left:0;top:0" width="1" height="1"><path d="M249.2 697.7 L252.5 700.9 L255.8 697.7" fill="none" stroke="#333" stroke-width="1.4"/></svg>
<svg style="left:0;top:0;" width="1" height="1"><path d="M270.5 695 L275.2 699 L270.5 703 Z M286 695 L290.7 699 L286 703 Z M292.2 695 V703" fill="#b8b8b8" stroke="#b8b8b8" stroke-width="1.2"/></svg>
<div class="vsep" style="left:301.5px;top:690.5px;height:16px;background:#c4c4c4"></div>
<div class="t sf" style="left:390px;top:694.5px;font-size:11.5px;color:#444;letter-spacing:0.5px">选择</div>
<div class="a" style="left:502px;top:690.5px;width:17px;height:16px;background:#c6c6c6;"></div>
<svg style="left:0;top:0;" width="1" height="1"><path d="M508 694.5 L513.5 698.5 L508 702.5 Z" fill="#222"/></svg>
<div class="a" style="left:519px;top:690.5px;width:233px;height:16px;background:#fafafa;"></div>
<svg style="left:0;top:0" width="1" height="1"><path d="M528.2 695.0 L524.8 698.5 L528.2 702.0" fill="none" stroke="#555" stroke-width="1.2"/></svg>
<svg style="left:0;top:0" width="1" height="1"><path d="M741.3 695.0 L744.7 698.5 L741.3 702.0" fill="none" stroke="#555" stroke-width="1.2"/></svg>
<div class="a" style="left:625px;top:691.5px;width:24.5px;height:14px;background:#dadada;border-radius:7px"></div>
<div class="a" style="left:752px;top:690.5px;width:15px;height:16px;background:#dcdcdc;"></div>
<svg style="left:0;top:0;" width="1" height="1"><defs><clipPath id="cv"><rect x="100.7" y="122.5" width="651.3" height="567.3"/></clipPath></defs><g clip-path="url(#cv)"><rect x="100" y="264.9" width="373" height="1.4" fill="#111"/><rect x="100.10" y="259.6" width="14.2" height="6.6" fill="#55a6de"/><rect x="117.10" y="199.8" width="14.2" height="66.4" fill="#55a6de"/><rect x="134.10" y="255.9" width="14.2" height="10.3" fill="#55a6de"/><rect x="151.10" y="192.4" width="14.2" height="73.8" fill="#55a6de"/><rect x="168.10" y="231.1" width="14.2" height="35.1" fill="#55a6de"/><rect x="185.10" y="259.2" width="14.2" height="7.0" fill="#55a6de"/><rect x="202.10" y="262.9" width="14.2" height="3.3" fill="#55a6de"/><rect x="219.10" y="262.5" width="14.2" height="3.7" fill="#55a6de"/><rect x="236.10" y="246.4" width="14.2" height="19.8" fill="#55a6de"/><rect x="253.10" y="253.8" width="14.2" height="12.4" fill="#55a6de"/><rect x="270.10" y="260.9" width="14.2" height="5.3" fill="#55a6de"/><rect x="287.10" y="257.6" width="14.2" height="8.6" fill="#55a6de"/><rect x="304.10" y="246.8" width="14.2" height="19.4" fill="#55a6de"/><rect x="321.10" y="240.2" width="14.2" height="26.0" fill="#55a6de"/><rect x="338.10" y="264.2" width="14.2" height="2.0" fill="#55a6de"/><rect x="355.10" y="258.0" width="14.2" height="8.2" fill="#55a6de"/><rect x="372.10" y="260.9" width="14.2" height="5.3" fill="#55a6de"/><rect x="389.10" y="262.9" width="14.2" height="3.3" fill="#55a6de"/><rect x="406.10" y="259.6" width="14.2" height="6.6" fill="#55a6de"/><rect x="423.10" y="260.0" width="14.2" height="6.2" fill="#55a6de"/><rect x="440.10" y="263.4" width="14.2" height="2.8" fill="#55a6de"/><rect x="457.10" y="258.8" width="14.2" height="7.4" fill="#55a6de"/><rect x="100" y="364.1" width="373" height="1.4" fill="#111"/><rect x="100.10" y="330.3" width="14.2" height="35.1" fill="#78be33"/><rect x="117.10" y="325.0" width="14.2" height="40.4" fill="#78be33"/><rect x="134.10" y="350.2" width="14.2" height="15.2" fill="#78be33"/><rect x="151.10" y="273.0" width="14.2" height="92.4" fill="#78be33"/><rect x="168.10" y="341.5" width="14.2" height="23.9" fill="#78be33"/><rect x="185.10" y="338.2" width="14.2" height="27.2" fill="#78be33"/><rect x="202.10" y="352.6" width="14.2" height="12.8" fill="#78be33"/><rect x="219.10" y="356.3" width="14.2" height="9.1" fill="#78be33"/><rect x="236.10" y="345.2" width="14.2" height="20.2" fill="#78be33"/><rect x="253.10" y="351.4" width="14.2" height="14.0" fill="#78be33"/><rect x="270.10" y="357.2" width="14.2" height="8.2" fill="#78be33"/><rect x="287.10" y="354.7" width="14.2" height="10.7" fill="#78be33"/><rect x="304.10" y="351.0" width="14.2" height="14.4" fill="#78be33"/><rect x="321.10" y="325.8" width="14.2" height="39.6" fill="#78be33"/><rect x="338.10" y="340.7" width="14.2" height="24.7" fill="#78be33"/><rect x="355.10" y="334.1" width="14.2" height="31.3" fill="#78be33"/><rect x="372.10" y="357.6" width="14.2" height="7.8" fill="#78be33"/><rect x="389.10" y="354.3" width="14.2" height="11.1" fill="#78be33"/><rect x="406.10" y="356.8" width="14.2" height="8.6" fill="#78be33"/><rect x="423.10" y="326.2" width="14.2" height="39.2" fill="#78be33"/><rect x="440.10" y="358.8" width="14.2" height="6.6" fill="#78be33"/><rect x="457.10" y="355.1" width="14.2" height="10.3" fill="#78be33"/><rect x="100" y="372.4" width="66.6" height="13.8" fill="#a5714a"/><rect x="166.5" y="372.4" width="34.2" height="13.8" fill="#7fa980"/><rect x="200.7" y="372.4" width="271.1" height="13.8" fill="#eec8c9"/><rect x="99.90" y="393.05" width="15.4" height="15.50" fill="#ff3012"/><rect x="116.84" y="393.05" width="15.4" height="15.50" fill="#ff3012"/><rect x="133.78" y="393.05" width="15.4" height="15.50" fill="#ff3012"/><rect x="150.72" y="393.05" width="15.4" height="15.50" fill="#ff3012"/><rect x="167.66" y="393.05" width="15.4" height="15.50" fill="#ff6020"/><rect x="184.60" y="393.05" width="15.4" height="15.50" fill="#ff6020"/><rect x="201.54" y="393.05" width="15.4" height="15.50" fill="#ff3012"/><rect x="218.48" y="393.05" width="15.4" height="15.50" fill="#ff4618"/><rect x="235.42" y="393.05" width="15.4" height="15.50" fill="#ff4618"/><rect x="252.36" y="393.05" width="15.4" height="15.50" fill="#ff3012"/><rect x="269.30" y="393.05" width="15.4" height="15.50" fill="#ff4618"/><rect x="286.24" y="393.05" width="15.4" height="15.50" fill="#ff6020"/><rect x="303.18" y="393.05" width="15.4" height="15.50" fill="#ff6020"/><rect x="320.12" y="393.05" width="15.4" height="15.50" fill="#ff6020"/><rect x="337.06" y="393.05" width="15.4" height="15.50" fill="#ff260e"/><rect x="354.00" y="393.05" width="15.4" height="15.50" fill="#ff6020"/><rect x="370.94" y="393.05" width="15.4" height="15.50" fill="#ff4618"/><rect x="387.88" y="393.05" width="15.4" height="15.50" fill="#ff4618"/><rect x="404.82" y="393.05" width="15.4" height="15.50" fill="#ff6020"/><rect x="421.76" y="393.05" width="15.4" height="15.50" fill="#ff260e"/><rect x="438.70" y="393.05" width="15.4" height="15.50" fill="#ff6020"/><rect x="455.64" y="393.05" width="15.4" height="15.50" fill="#ff6020"/><rect x="99.90" y="409.99" width="15.4" height="15.50" fill="#ff3012"/><rect x="116.84" y="409.99" width="15.4" height="15.50" fill="#ff3012"/><rect x="133.78" y="409.99" width="15.4" height="15.50" fill="#ff4618"/><rect x="150.72" y="409.99" width="15.4" height="15.50" fill="#ff1c0a"/><rect x="167.66" y="409.99" width="15.4" height="15.50" fill="#ff6020"/><rect x="184.60" y="409.99" width="15.4" height="15.50" fill="#ff6020"/><rect x="201.54" y="409.99" width="15.4" height="15.50" fill="#ff6020"/><rect x="218.48" y="409.99" width="15.4" height="15.50" fill="#ff6020"/><rect x="235.42" y="409.99" width="15.4" height="15.50" fill="#ff6020"/><rect x="252.36" y="409.99" width="15.4" height="15.50" fill="#ff4618"/><rect x="269.30" y="409.99" width="15.4" height="15.50" fill="#ff6020"/><rect x="286.24" y="409.99" width="15.4" height="15.50" fill="#ff6020"/><rect x="303.18" y="409.99" width="15.4" height="15.50" fill="#ff4618"/><rect x="320.12" y="409.99" width="15.4" height="15.50" fill="#ff6020"/><rect x="337.06" y="409.99" width="15.4" height="15.50" fill="#ff4618"/><rect x="354.00" y="409.99" width="15.4" height="15.50" fill="#ff6020"/><rect x="370.94" y="409.99" width="15.4" height="15.50" fill="#ff4618"/><rect x="387.88" y="409.99" width="15.4" height="15.50" fill="#ff4618"/><rect x="404.82" y="409.99" width="15.4" height="15.50" fill="#ff6020"/><rect x="421.76" y="409.99" width="15.4" height="15.50" fill="#ff4618"/><rect x="438.70" y="409.99" width="15.4" height="15.50" fill="#ff6020"/><rect x="455.64" y="409.99" width="15.4" height="15.50" fill="#ff6020"/><rect x="99.90" y="426.93" width="15.4" height="15.50" fill="#ff6020"/><rect x="116.84" y="426.93" width="15.4" height="15.50" fill="#ff4618"/><rect x="133.78" y="426.93" width="15.4" height="15.50" fill="#ff7a28"/><rect x="150.72" y="426.93" width="15.4" height="15.50" fill="#ff1608"/><rect x="167.66" y="426.93" width="15.4" height="15.50" fill="#ff6020"/><rect x="184.60" y="426.93" width="15.4" height="15.50" fill="#ff4618"/><rect x="201.54" y="426.93" width="15.4" height="15.50" fill="#ff6020"/><rect x="218.48" y="426.93" width="15.4" height="15.50" fill="#ff7a28"/><rect x="235.42" y="426.93" width="15.4" height="15.50" fill="#ff4618"/><rect x="252.36" y="426.93" width="15.4" height="15.50" fill="#ff6020"/><rect x="269.30" y="426.93" width="15.4" height="15.50" fill="#ff6020"/><rect x="286.24" y="426.93" width="15.4" height="15.50" fill="#ff6d24"/><rect x="303.18" y="426.93" width="15.4" height="15.50" fill="#ff6020"/><rect x="320.12" y="426.93" width="15.4" height="15.50" fill="#ff260e"/><rect x="337.06" y="426.93" width="15.4" height="15.50" fill="#ff6020"/><rect x="354.00" y="426.93" width="15.4" height="15.50" fill="#ff1c0a"/><rect x="370.94" y="426.93" width="15.4" height="15.50" fill="#ff6020"/><rect x="387.88" y="426.93" width="15.4" height="15.50" fill="#ff6020"/><rect x="404.82" y="426.93" width="15.4" height="15.50" fill="#ff6020"/><rect x="421.76" y="426.93" width="15.4" height="15.50" fill="#ff6020"/><rect x="438.70" y="426.93" width="15.4" height="15.50" fill="#ff6020"/><rect x="455.64" y="426.93" width="15.4" height="15.50" fill="#ff4618"/><rect x="99.90" y="443.87" width="15.4" height="15.50" fill="#ff1c0a"/><rect x="116.84" y="443.87" width="15.4" height="15.50" fill="#ff3012"/><rect x="133.78" y="443.87" width="15.4" height="15.50" fill="#ff6020"/><rect x="150.72" y="443.87" width="15.4" height="15.50" fill="#ff3012"/><rect x="167.66" y="443.87" width="15.4" height="15.50" fill="#ff4618"/><rect x="184.60" y="443.87" width="15.4" height="15.50" fill="#ff6020"/><rect x="201.54" y="443.87" width="15.4" height="15.50" fill="#ff6020"/><rect x="218.48" y="443.87" width="15.4" height="15.50" fill="#ff6020"/><rect x="235.42" y="443.87" width="15.4" height="15.50" fill="#ff4618"/><rect x="252.36" y="443.87" width="15.4" height="15.50" fill="#ff4618"/><rect x="269.30" y="443.87" width="15.4" height="15.50" fill="#ff6020"/><rect x="286.24" y="443.87" width="15.4" height="15.50" fill="#ff6020"/><rect x="303.18" y="443.87" width="15.4" height="15.50" fill="#ff4618"/><rect x="320.12" y="443.87" width="15.4" height="15.50" fill="#ff6020"/><rect x="337.06" y="443.87" width="15.4" height="15.50" fill="#ff4618"/><rect x="354.00" y="443.87" width="15.4" height="15.50" fill="#ff6020"/><rect x="370.94" y="443.87" width="15.4" height="15.50" fill="#ff6020"/><rect x="387.88" y="443.87" width="15.4" height="15.50" fill="#ff6020"/><rect x="404.82" y="443.87" width="15.4" height="15.50" fill="#ff6d24"/><rect x="421.76" y="443.87" width="15.4" height="15.50" fill="#ff260e"/><rect x="438.70" y="443.87" width="15.4" height="15.50" fill="#ff6020"/><rect x="455.64" y="443.87" width="15.4" height="15.50" fill="#ff6020"/><rect x="99.90" y="460.81" width="15.4" height="15.50" fill="#ff6020"/><rect x="116.84" y="460.81" width="15.4" height="15.50" fill="#ff4618"/><rect x="133.78" y="460.81" width="15.4" height="15.50" fill="#ff6020"/><rect x="150.72" y="460.81" width="15.4" height="15.50" fill="#ff1c0a"/><rect x="167.66" y="460.81" width="15.4" height="15.50" fill="#ff3b15"/><rect x="184.60" y="460.81" width="15.4" height="15.50" fill="#ff260e"/><rect x="201.54" y="460.81" width="15.4" height="15.50" fill="#ff7a28"/><rect x="218.48" y="460.81" width="15.4" height="15.50" fill="#ff7a28"/><rect x="235.42" y="460.81" width="15.4" height="15.50" fill="#ff531c"/><rect x="252.36" y="460.81" width="15.4" height="15.50" fill="#ff963a"/><rect x="269.30" y="460.81" width="15.4" height="15.50" fill="#ff7a28"/><rect x="286.24" y="460.81" width="15.4" height="15.50" fill="#ff6020"/><rect x="303.18" y="460.81" width="15.4" height="15.50" fill="#ff6020"/><rect x="320.12" y="460.81" width="15.4" height="15.50" fill="#ff260e"/><rect x="337.06" y="460.81" width="15.4" height="15.50" fill="#ff6020"/><rect x="354.00" y="460.81" width="15.4" height="15.50" fill="#ff3012"/><rect x="370.94" y="460.81" width="15.4" height="15.50" fill="#ff963a"/><rect x="387.88" y="460.81" width="15.4" height="15.50" fill="#ff7a28"/><rect x="404.82" y="460.81" width="15.4" height="15.50" fill="#ff7a28"/><rect x="421.76" y="460.81" width="15.4" height="15.50" fill="#ff963a"/><rect x="438.70" y="460.81" width="15.4" height="15.50" fill="#ff7a28"/><rect x="455.64" y="460.81" width="15.4" height="15.50" fill="#ff6020"/><rect x="99.90" y="477.75" width="15.4" height="15.50" fill="#ff7a28"/><rect x="116.84" y="477.75" width="15.4" height="15.50" fill="#ff4618"/><rect x="133.78" y="477.75" width="15.4" height="15.50" fill="#ff6020"/><rect x="150.72" y="477.75" width="15.4" height="15.50" fill="#ff1c0a"/><rect x="167.66" y="477.75" width="15.4" height="15.50" fill="#ff4618"/><rect x="184.60" y="477.75" width="15.4" height="15.50" fill="#ff4618"/><rect x="201.54" y="477.75" width="15.4" height="15.50" fill="#ff7a28"/><rect x="218.48" y="477.75" width="15.4" height="15.50" fill="#ff6020"/><rect x="235.42" y="477.75" width="15.4" height="15.50" fill="#ff6020"/><rect x="252.36" y="477.75" width="15.4" height="15.50" fill="#ff7a28"/><rect x="269.30" y="477.75" width="15.4" height="15.50" fill="#ff7a28"/><rect x="286.24" y="477.75" width="15.4" height="15.50" fill="#ff6020"/><rect x="303.18" y="477.75" width="15.4" height="15.50" fill="#ff6020"/><rect x="320.12" y="477.75" width="15.4" height="15.50" fill="#ff3012"/><rect x="337.06" y="477.75" width="15.4" height="15.50" fill="#ff4618"/><rect x="354.00" y="477.75" width="15.4" height="15.50" fill="#ff4618"/><rect x="370.94" y="477.75" width="15.4" height="15.50" fill="#ffa14f"/><rect x="387.88" y="477.75" width="15.4" height="15.50" fill="#ff6020"/><rect x="404.82" y="477.75" width="15.4" height="15.50" fill="#ff6020"/><rect x="421.76" y="477.75" width="15.4" height="15.50" fill="#ff260e"/><rect x="438.70" y="477.75" width="15.4" height="15.50" fill="#ff7a28"/><rect x="455.64" y="477.75" width="15.4" height="15.50" fill="#ff7a28"/><rect x="99.90" y="494.69" width="15.4" height="15.50" fill="#ff6020"/><rect x="116.84" y="494.69" width="15.4" height="15.50" fill="#ff6020"/><rect x="133.78" y="494.69" width="15.4" height="15.50" fill="#ff7a28"/><rect x="150.72" y="494.69" width="15.4" height="15.50" fill="#ff963a"/><rect x="167.66" y="494.69" width="15.4" height="15.50" fill="#ff7a28"/><rect x="184.60" y="494.69" width="15.4" height="15.50" fill="#ffac64"/><rect x="201.54" y="494.69" width="15.4" height="15.50" fill="#ffc896"/><rect x="218.48" y="494.69" width="15.4" height="15.50" fill="#ffac64"/><rect x="235.42" y="494.69" width="15.4" height="15.50" fill="#ff963a"/><rect x="252.36" y="494.69" width="15.4" height="15.50" fill="#ff7a28"/><rect x="269.30" y="494.69" width="15.4" height="15.50" fill="#ff7a28"/><rect x="286.24" y="494.69" width="15.4" height="15.50" fill="#ff7a28"/><rect x="303.18" y="494.69" width="15.4" height="15.50" fill="#ff7a28"/><rect x="320.12" y="494.69" width="15.4" height="15.50" fill="#ff7a28"/><rect x="337.06" y="494.69" width="15.4" height="15.50" fill="#ff4618"/><rect x="354.00" y="494.69" width="15.4" height="15.50" fill="#ffdec1"/><rect x="370.94" y="494.69" width="15.4" height="15.50" fill="#ff963a"/><rect x="387.88" y="494.69" width="15.4" height="15.50" fill="#ff7a28"/><rect x="404.82" y="494.69" width="15.4" height="15.50" fill="#ff963a"/><rect x="421.76" y="494.69" width="15.4" height="15.50" fill="#ffa14f"/><rect x="438.70" y="494.69" width="15.4" height="15.50" fill="#ff963a"/><rect x="455.64" y="494.69" width="15.4" height="15.50" fill="#ff7a28"/><rect x="99.90" y="511.63" width="15.4" height="15.50" fill="#ff963a"/><rect x="116.84" y="511.63" width="15.4" height="15.50" fill="#ff7a28"/><rect x="133.78" y="511.63" width="15.4" height="15.50" fill="#ffac64"/><rect x="150.72" y="511.63" width="15.4" height="15.50" fill="#ff963a"/><rect x="167.66" y="511.63" width="15.4" height="15.50" fill="#ffc28c"/><rect x="184.60" y="511.63" width="15.4" height="15.50" fill="#ffc896"/><rect x="201.54" y="511.63" width="15.4" height="15.50" fill="#ffe4cc"/><rect x="218.48" y="511.63" width="15.4" height="15.50" fill="#ffe4cc"/><rect x="235.42" y="511.63" width="15.4" height="15.50" fill="#ff963a"/><rect x="252.36" y="511.63" width="15.4" height="15.50" fill="#ff963a"/><rect x="269.30" y="511.63" width="15.4" height="15.50" fill="#ff963a"/><rect x="286.24" y="511.63" width="15.4" height="15.50" fill="#ffdec1"/><rect x="303.18" y="511.63" width="15.4" height="15.50" fill="#ff963a"/><rect x="320.12" y="511.63" width="15.4" height="15.50" fill="#ffa14f"/><rect x="337.06" y="511.63" width="15.4" height="15.50" fill="#ff963a"/><rect x="354.00" y="511.63" width="15.4" height="15.50" fill="#ffdec1"/><rect x="370.94" y="511.63" width="15.4" height="15.50" fill="#ffa14f"/><rect x="387.88" y="511.63" width="15.4" height="15.50" fill="#ff963a"/><rect x="404.82" y="511.63" width="15.4" height="15.50" fill="#ff963a"/><rect x="421.76" y="511.63" width="15.4" height="15.50" fill="#ff8831"/><rect x="438.70" y="511.63" width="15.4" height="15.50" fill="#ffa14f"/><rect x="455.64" y="511.63" width="15.4" height="15.50" fill="#ffba7d"/><rect x="99.90" y="528.57" width="15.4" height="15.50" fill="#ff6020"/><rect x="116.84" y="528.57" width="15.4" height="15.50" fill="#ff6020"/><rect x="133.78" y="528.57" width="15.4" height="15.50" fill="#ffac64"/><rect x="150.72" y="528.57" width="15.4" height="15.50" fill="#ff6020"/><rect x="167.66" y="528.57" width="15.4" height="15.50" fill="#ff6020"/><rect x="184.60" y="528.57" width="15.4" height="15.50" fill="#ffac64"/><rect x="201.54" y="528.57" width="15.4" height="15.50" fill="#ff7a28"/><rect x="218.48" y="528.57" width="15.4" height="15.50" fill="#ff963a"/><rect x="235.42" y="528.57" width="15.4" height="15.50" fill="#ff963a"/><rect x="252.36" y="528.57" width="15.4" height="15.50" fill="#ff7a28"/><rect x="269.30" y="528.57" width="15.4" height="15.50" fill="#ff7a28"/><rect x="286.24" y="528.57" width="15.4" height="15.50" fill="#ff7a28"/><rect x="303.18" y="528.57" width="15.4" height="15.50" fill="#ff6020"/><rect x="320.12" y="528.57" width="15.4" height="15.50" fill="#ff7a28"/><rect x="337.06" y="528.57" width="15.4" height="15.50" fill="#ff7a28"/><rect x="354.00" y="528.57" width="15.4" height="15.50" fill="#ffa14f"/><rect x="370.94" y="528.57" width="15.4" height="15.50" fill="#ff963a"/><rect x="387.88" y="528.57" width="15.4" height="15.50" fill="#ff7a28"/><rect x="404.82" y="528.57" width="15.4" height="15.50" fill="#ff6020"/><rect x="421.76" y="528.57" width="15.4" height="15.50" fill="#ff4618"/><rect x="438.70" y="528.57" width="15.4" height="15.50" fill="#ff6020"/><rect x="455.64" y="528.57" width="15.4" height="15.50" fill="#ff7a28"/><rect x="99.90" y="545.51" width="15.4" height="15.50" fill="#ff6020"/><rect x="116.84" y="545.51" width="15.4" height="15.50" fill="#ff3b15"/><rect x="133.78" y="545.51" width="15.4" height="15.50" fill="#ff6020"/><rect x="150.72" y="545.51" width="15.4" height="15.50" fill="#ff1608"/><rect x="167.66" y="545.51" width="15.4" height="15.50" fill="#ff4618"/><rect x="184.60" y="545.51" width="15.4" height="15.50" fill="#ff3b15"/><rect x="201.54" y="545.51" width="15.4" height="15.50" fill="#ff6020"/><rect x="218.48" y="545.51" width="15.4" height="15.50" fill="#ff8831"/><rect x="235.42" y="545.51" width="15.4" height="15.50" fill="#ff3b15"/><rect x="252.36" y="545.51" width="15.4" height="15.50" fill="#ff8831"/><rect x="269.30" y="545.51" width="15.4" height="15.50" fill="#ff963a"/><rect x="286.24" y="545.51" width="15.4" height="15.50" fill="#ff963a"/><rect x="303.18" y="545.51" width="15.4" height="15.50" fill="#ff6020"/><rect x="320.12" y="545.51" width="15.4" height="15.50" fill="#ff260e"/><rect x="337.06" y="545.51" width="15.4" height="15.50" fill="#ff8831"/><rect x="354.00" y="545.51" width="15.4" height="15.50" fill="#ff3b15"/><rect x="370.94" y="545.51" width="15.4" height="15.50" fill="#ffac64"/><rect x="387.88" y="545.51" width="15.4" height="15.50" fill="#ff8831"/><rect x="404.82" y="545.51" width="15.4" height="15.50" fill="#ff6d24"/><rect x="421.76" y="545.51" width="15.4" height="15.50" fill="#ff531c"/><rect x="438.70" y="545.51" width="15.4" height="15.50" fill="#ff8831"/><rect x="455.64" y="545.51" width="15.4" height="15.50" fill="#ff6020"/><rect x="99.90" y="562.45" width="15.4" height="15.50" fill="#ffa14f"/><rect x="116.84" y="562.45" width="15.4" height="15.50" fill="#ff3b15"/><rect x="133.78" y="562.45" width="15.4" height="15.50" fill="#ff6020"/><rect x="150.72" y="562.45" width="15.4" height="15.50" fill="#ff260e"/><rect x="167.66" y="562.45" width="15.4" height="15.50" fill="#ff6020"/><rect x="184.60" y="562.45" width="15.4" height="15.50" fill="#ff6d24"/><rect x="201.54" y="562.45" width="15.4" height="15.50" fill="#ff963a"/><rect x="218.48" y="562.45" width="15.4" height="15.50" fill="#ff8831"/><rect x="235.42" y="562.45" width="15.4" height="15.50" fill="#ff4618"/><rect x="252.36" y="562.45" width="15.4" height="15.50" fill="#ff963a"/><rect x="269.30" y="562.45" width="15.4" height="15.50" fill="#ffa14f"/><rect x="286.24" y="562.45" width="15.4" height="15.50" fill="#ff963a"/><rect x="303.18" y="562.45" width="15.4" height="15.50" fill="#ff6020"/><rect x="320.12" y="562.45" width="15.4" height="15.50" fill="#ff260e"/><rect x="337.06" y="562.45" width="15.4" height="15.50" fill="#ff8831"/><rect x="354.00" y="562.45" width="15.4" height="15.50" fill="#ff3b15"/><rect x="370.94" y="562.45" width="15.4" height="15.50" fill="#ffa14f"/><rect x="387.88" y="562.45" width="15.4" height="15.50" fill="#ffa14f"/><rect x="404.82" y="562.45" width="15.4" height="15.50" fill="#ff963a"/><rect x="421.76" y="562.45" width="15.4" height="15.50" fill="#ff963a"/><rect x="438.70" y="562.45" width="15.4" height="15.50" fill="#ffac64"/><rect x="455.64" y="562.45" width="15.4" height="15.50" fill="#ffa14f"/><rect x="116.84" y="579.39" width="15.4" height="15.50" fill="#ff8831"/><rect x="133.78" y="579.39" width="15.4" height="15.50" fill="#ffac64"/><rect x="150.72" y="579.39" width="15.4" height="15.50" fill="#ffeddd"/><rect x="167.66" y="579.39" width="15.4" height="15.50" fill="#ffac64"/><rect x="184.60" y="579.39" width="15.4" height="15.50" fill="#ff6d24"/><rect x="201.54" y="579.39" width="15.4" height="15.50" fill="#ff6d24"/><rect x="235.42" y="579.39" width="15.4" height="15.50" fill="#fff5ed"/><rect x="252.36" y="579.39" width="15.4" height="15.50" fill="#ff8831"/><rect x="269.30" y="579.39" width="15.4" height="15.50" fill="#ffa14f"/><rect x="286.24" y="579.39" width="15.4" height="15.50" fill="#ffac64"/><rect x="303.18" y="579.39" width="15.4" height="15.50" fill="#ffa14f"/><rect x="320.12" y="579.39" width="15.4" height="15.50" fill="#ffa14f"/><rect x="337.06" y="579.39" width="15.4" height="15.50" fill="#ff8831"/><rect x="354.00" y="579.39" width="15.4" height="15.50" fill="#ff963a"/><rect x="387.88" y="579.39" width="15.4" height="15.50" fill="#ffa14f"/><rect x="404.82" y="579.39" width="15.4" height="15.50" fill="#ffba7d"/><rect x="421.76" y="579.39" width="15.4" height="15.50" fill="#ffac64"/><rect x="438.70" y="579.39" width="15.4" height="15.50" fill="#ffac64"/><rect x="99.90" y="596.33" width="15.4" height="15.50" fill="#ff6d24"/><rect x="116.84" y="596.33" width="15.4" height="15.50" fill="#ff6d24"/><rect x="133.78" y="596.33" width="15.4" height="15.50" fill="#ff7a28"/><rect x="150.72" y="596.33" width="15.4" height="15.50" fill="#ff6d24"/><rect x="167.66" y="596.33" width="15.4" height="15.50" fill="#ff8831"/><rect x="184.60" y="596.33" width="15.4" height="15.50" fill="#ffa14f"/><rect x="201.54" y="596.33" width="15.4" height="15.50" fill="#ffac64"/><rect x="218.48" y="596.33" width="15.4" height="15.50" fill="#ffac64"/><rect x="235.42" y="596.33" width="15.4" height="15.50" fill="#ff7a28"/><rect x="252.36" y="596.33" width="15.4" height="15.50" fill="#ff6d24"/><rect x="269.30" y="596.33" width="15.4" height="15.50" fill="#ffa14f"/><rect x="286.24" y="596.33" width="15.4" height="15.50" fill="#ff963a"/><rect x="303.18" y="596.33" width="15.4" height="15.50" fill="#ff6d24"/><rect x="320.12" y="596.33" width="15.4" height="15.50" fill="#ff963a"/><rect x="337.06" y="596.33" width="15.4" height="15.50" fill="#ffba7d"/><rect x="354.00" y="596.33" width="15.4" height="15.50" fill="#ffac64"/><rect x="370.94" y="596.33" width="15.4" height="15.50" fill="#ff6d24"/><rect x="387.88" y="596.33" width="15.4" height="15.50" fill="#ffac64"/><rect x="404.82" y="596.33" width="15.4" height="15.50" fill="#ffa85c"/><rect x="421.76" y="596.33" width="15.4" height="15.50" fill="#ffac64"/><rect x="438.70" y="596.33" width="15.4" height="15.50" fill="#ffba7d"/><rect x="455.64" y="596.33" width="15.4" height="15.50" fill="#ff7a28"/><rect x="99.90" y="613.27" width="15.4" height="15.50" fill="#ffd6b1"/><rect x="116.84" y="613.27" width="15.4" height="15.50" fill="#ff963a"/><rect x="133.78" y="613.27" width="15.4" height="15.50" fill="#ff6020"/><rect x="150.72" y="613.27" width="15.4" height="15.50" fill="#ff3b15"/><rect x="167.66" y="613.27" width="15.4" height="15.50" fill="#ff6020"/><rect x="184.60" y="613.27" width="15.4" height="15.50" fill="#ffa14f"/><rect x="201.54" y="613.27" width="15.4" height="15.50" fill="#ffac64"/><rect x="218.48" y="613.27" width="15.4" height="15.50" fill="#ffba7d"/><rect x="235.42" y="613.27" width="15.4" height="15.50" fill="#ff6020"/><rect x="252.36" y="613.27" width="15.4" height="15.50" fill="#ffac64"/><rect x="269.30" y="613.27" width="15.4" height="15.50" fill="#ffc896"/><rect x="286.24" y="613.27" width="15.4" height="15.50" fill="#ff963a"/><rect x="303.18" y="613.27" width="15.4" height="15.50" fill="#ff8831"/><rect x="320.12" y="613.27" width="15.4" height="15.50" fill="#ff6020"/><rect x="337.06" y="613.27" width="15.4" height="15.50" fill="#ffdec1"/><rect x="354.00" y="613.27" width="15.4" height="15.50" fill="#ff6d24"/><rect x="370.94" y="613.27" width="15.4" height="15.50" fill="#ff963a"/><rect x="387.88" y="613.27" width="15.4" height="15.50" fill="#ffba7d"/><rect x="404.82" y="613.27" width="15.4" height="15.50" fill="#ff963a"/><rect x="421.76" y="613.27" width="15.4" height="15.50" fill="#ffac64"/><rect x="438.70" y="613.27" width="15.4" height="15.50" fill="#ffba7d"/><rect x="455.64" y="613.27" width="15.4" height="15.50" fill="#ffac64"/><rect x="99.90" y="630.21" width="15.4" height="15.50" fill="#ffa14f"/><rect x="116.84" y="630.21" width="15.4" height="15.50" fill="#ff6020"/><rect x="133.78" y="630.21" width="15.4" height="15.50" fill="#ff6020"/><rect x="150.72" y="630.21" width="15.4" height="15.50" fill="#ff260e"/><rect x="167.66" y="630.21" width="15.4" height="15.50" fill="#ff3b15"/><rect x="184.60" y="630.21" width="15.4" height="15.50" fill="#ff3012"/><rect x="201.54" y="630.21" width="15.4" height="15.50" fill="#ff7a28"/><rect x="218.48" y="630.21" width="15.4" height="15.50" fill="#ff963a"/><rect x="235.42" y="630.21" width="15.4" height="15.50" fill="#ff4618"/><rect x="252.36" y="630.21" width="15.4" height="15.50" fill="#ff7a28"/><rect x="269.30" y="630.21" width="15.4" height="15.50" fill="#ffa14f"/><rect x="286.24" y="630.21" width="15.4" height="15.50" fill="#ff4618"/><rect x="303.18" y="630.21" width="15.4" height="15.50" fill="#ff4618"/><rect x="320.12" y="630.21" width="15.4" height="15.50" fill="#ff4618"/><rect x="337.06" y="630.21" width="15.4" height="15.50" fill="#ffc28c"/><rect x="354.00" y="630.21" width="15.4" height="15.50" fill="#ff3012"/><rect x="370.94" y="630.21" width="15.4" height="15.50" fill="#ff963a"/><rect x="387.88" y="630.21" width="15.4" height="15.50" fill="#ffba7d"/><rect x="404.82" y="630.21" width="15.4" height="15.50" fill="#fff5ed"/><rect x="455.64" y="630.21" width="15.4" height="15.50" fill="#ff6020"/><rect x="99.90" y="647.15" width="15.4" height="15.50" fill="#ff6020"/><rect x="116.84" y="647.15" width="15.4" height="15.50" fill="#ff6020"/><rect x="133.78" y="647.15" width="15.4" height="15.50" fill="#ff8831"/><rect x="150.72" y="647.15" width="15.4" height="15.50" fill="#ff4618"/><rect x="167.66" y="647.15" width="15.4" height="15.50" fill="#ff6020"/><rect x="184.60" y="647.15" width="15.4" height="15.50" fill="#ff531c"/><rect x="201.54" y="647.15" width="15.4" height="15.50" fill="#ff6d24"/><rect x="218.48" y="647.15" width="15.4" height="15.50" fill="#ffac64"/><rect x="235.42" y="647.15" width="15.4" height="15.50" fill="#ffba7d"/><rect x="252.36" y="647.15" width="15.4" height="15.50" fill="#ff963a"/><rect x="269.30" y="647.15" width="15.4" height="15.50" fill="#ffac64"/><rect x="286.24" y="647.15" width="15.4" height="15.50" fill="#ff963a"/><rect x="303.18" y="647.15" width="15.4" height="15.50" fill="#ffa14f"/><rect x="320.12" y="647.15" width="15.4" height="15.50" fill="#ff8831"/><rect x="337.06" y="647.15" width="15.4" height="15.50" fill="#ffc896"/><rect x="354.00" y="647.15" width="15.4" height="15.50" fill="#ff8831"/><rect x="370.94" y="647.15" width="15.4" height="15.50" fill="#ffba7d"/><rect x="387.88" y="647.15" width="15.4" height="15.50" fill="#ffba7d"/><rect x="404.82" y="647.15" width="15.4" height="15.50" fill="#ffd6b1"/><rect x="438.70" y="647.15" width="15.4" height="15.50" fill="#ffeddd"/><rect x="455.64" y="647.15" width="15.4" height="15.50" fill="#ff963a"/><rect x="116.84" y="664.09" width="15.4" height="15.50" fill="#ffdec1"/><rect x="150.72" y="664.09" width="15.4" height="15.50" fill="#ffdec1"/><rect x="201.54" y="664.09" width="15.4" height="15.50" fill="#fff5ed"/><rect x="252.36" y="664.09" width="15.4" height="15.50" fill="#ffd6b1"/><rect x="269.30" y="664.09" width="15.4" height="15.50" fill="#ffdec1"/><rect x="286.24" y="664.09" width="15.4" height="15.50" fill="#ffeddd"/><rect x="303.18" y="664.09" width="15.4" height="15.50" fill="#ffeddd"/><rect x="320.12" y="664.09" width="15.4" height="15.50" fill="#ffeddd"/><rect x="337.06" y="664.09" width="15.4" height="15.50" fill="#ffdec1"/><rect x="387.88" y="664.09" width="15.4" height="15.50" fill="#ffd6b1"/><rect x="404.82" y="664.09" width="15.4" height="15.50" fill="#ffa14f"/><rect x="421.76" y="664.09" width="15.4" height="15.50" fill="#ff7a28"/><rect x="438.70" y="664.09" width="15.4" height="15.50" fill="#ffc896"/><rect x="99.90" y="681.03" width="15.4" height="8.77" fill="#fff5ed"/><rect x="116.84" y="681.03" width="15.4" height="8.77" fill="#fff5ed"/><rect x="133.78" y="681.03" width="15.4" height="8.77" fill="#ffd6b1"/><rect x="150.72" y="681.03" width="15.4" height="8.77" fill="#fff0e2"/><rect x="167.66" y="681.03" width="15.4" height="8.77" fill="#ffc896"/><rect x="201.54" y="681.03" width="15.4" height="8.77" fill="#ffd6b1"/><rect x="218.48" y="681.03" width="15.4" height="8.77" fill="#ffd6b1"/><rect x="235.42" y="681.03" width="15.4" height="8.77" fill="#ffd6b1"/><rect x="269.30" y="681.03" width="15.4" height="8.77" fill="#ffd6b1"/><rect x="286.24" y="681.03" width="15.4" height="8.77" fill="#fff0e2"/><rect x="303.18" y="681.03" width="15.4" height="8.77" fill="#ffba7d"/><rect x="320.12" y="681.03" width="15.4" height="8.77" fill="#ffeddd"/><rect x="337.06" y="681.03" width="15.4" height="8.77" fill="#ffdec1"/><rect x="354.00" y="681.03" width="15.4" height="8.77" fill="#fff5ed"/><rect x="370.94" y="681.03" width="15.4" height="8.77" fill="#ffeddd"/><rect x="387.88" y="681.03" width="15.4" height="8.77" fill="#ffd6b1"/><rect x="404.82" y="681.03" width="15.4" height="8.77" fill="#ffac64"/><rect x="421.76" y="681.03" width="15.4" height="8.77" fill="#ffa14f"/><rect x="438.70" y="681.03" width="15.4" height="8.77" fill="#ff8831"/><rect x="455.64" y="681.03" width="15.4" height="8.77" fill="#ffeddd"/></g><rect x="477.90000000000003" y="387.8" width="1.4" height="302.0" fill="#000"/><rect x="588.0" y="387.8" width="1.4" height="302.0" fill="#000"/><rect x="477.90000000000003" y="391.3" width="110.8" height="1.5" fill="#000"/><rect x="588.0" y="391.3" width="111.8" height="1.5" fill="#000"/><rect x="478.4" y="393.20" width="93.4" height="14.50" fill="#78be33"/><rect x="588.5" y="393.20" width="92.5" height="14.50" fill="#55a6de"/><rect x="478.4" y="410.14" width="77.4" height="14.50" fill="#78be33"/><rect x="588.5" y="410.14" width="59.8" height="14.50" fill="#55a6de"/><rect x="478.4" y="427.08" width="68.0" height="14.50" fill="#78be33"/><rect x="588.5" y="427.08" width="40.2" height="14.50" fill="#55a6de"/><rect x="478.4" y="444.02" width="58.6" height="14.50" fill="#78be33"/><rect x="588.5" y="444.02" width="45.3" height="14.50" fill="#55a6de"/><rect x="478.4" y="460.96" width="40.8" height="14.50" fill="#78be33"/><rect x="588.5" y="460.96" width="23.2" height="14.50" fill="#55a6de"/><rect x="478.4" y="477.90" width="47.7" height="14.50" fill="#78be33"/><rect x="588.5" y="477.90" width="31.4" height="14.50" fill="#55a6de"/><rect x="478.4" y="494.84" width="38.0" height="14.50" fill="#78be33"/><rect x="588.5" y="494.84" width="15.0" height="14.50" fill="#55a6de"/><rect x="478.4" y="511.78" width="6.9" height="14.50" fill="#78be33"/><rect x="588.5" y="511.78" width="3.8" height="14.50" fill="#55a6de"/><rect x="478.4" y="528.72" width="11.1" height="14.50" fill="#78be33"/><rect x="588.5" y="528.72" width="6.9" height="14.50" fill="#55a6de"/><rect x="478.4" y="545.66" width="25.0" height="14.50" fill="#78be33"/><rect x="588.5" y="545.66" width="7.5" height="14.50" fill="#55a6de"/><rect x="478.4" y="562.60" width="17.8" height="14.50" fill="#78be33"/><rect x="588.5" y="562.60" width="5.4" height="14.50" fill="#55a6de"/><rect x="478.4" y="579.54" width="11.7" height="14.50" fill="#78be33"/><rect x="588.5" y="579.54" width="4.4" height="14.50" fill="#55a6de"/><rect x="478.4" y="596.48" width="6.6" height="14.50" fill="#78be33"/><rect x="588.5" y="596.48" width="2.3" height="14.50" fill="#55a6de"/><rect x="478.4" y="613.42" width="5.4" height="14.50" fill="#78be33"/><rect x="588.5" y="613.42" width="2.6" height="14.50" fill="#55a6de"/><rect x="478.4" y="630.36" width="15.3" height="14.50" fill="#78be33"/><rect x="588.5" y="630.36" width="4.1" height="14.50" fill="#55a6de"/><rect x="478.4" y="647.30" width="5.7" height="14.50" fill="#78be33"/><rect x="588.5" y="647.30" width="2.3" height="14.50" fill="#55a6de"/><rect x="478.4" y="664.24" width="3.2" height="14.50" fill="#78be33"/><rect x="588.5" y="664.24" width="1.4" height="14.50" fill="#55a6de"/><rect x="478.4" y="681.18" width="2.6" height="8.62" fill="#78be33"/><path d="M478.6 389.5 V392" stroke="#111" stroke-width="1"/><path d="M493.0 389.5 V392" stroke="#111" stroke-width="1"/><path d="M507.4 389.5 V392" stroke="#111" stroke-width="1"/><path d="M521.8 389.5 V392" stroke="#111" stroke-width="1"/><path d="M536.2 389.5 V392" stroke="#111" stroke-width="1"/><path d="M550.6 389.5 V392" stroke="#111" stroke-width="1"/><path d="M565.0 389.5 V392" stroke="#111" stroke-width="1"/><path d="M579.4 389.5 V392" stroke="#111" stroke-width="1"/><path d="M588.7 389.5 V392" stroke="#111" stroke-width="1"/><path d="M602.5 389.5 V392" stroke="#111" stroke-width="1"/><path d="M616.3 389.5 V392" stroke="#111" stroke-width="1"/><path d="M630.1 389.5 V392" stroke="#111" stroke-width="1"/><path d="M643.9 389.5 V392" stroke="#111" stroke-width="1"/><path d="M657.7 389.5 V392" stroke="#111" stroke-width="1"/><path d="M671.5 389.5 V392" stroke="#111" stroke-width="1"/><path d="M685.3 389.5 V392" stroke="#111" stroke-width="1"/><path d="M699.1 389.5 V392" stroke="#111" stroke-width="1"/><text x="479.6" y="382.3" font-size="12.4" text-anchor="middle" font-family="Liberation Sans, sans-serif" fill="#111">0</text><text x="507.6" y="382.3" font-size="12.4" text-anchor="middle" font-family="Liberation Sans, sans-serif" fill="#111">14</text><text x="536.2" y="382.3" font-size="12.4" text-anchor="middle" font-family="Liberation Sans, sans-serif" fill="#111">28</text><text x="565" y="382.3" font-size="12.4" text-anchor="middle" font-family="Liberation Sans, sans-serif" fill="#111">42</text><text x="589.2" y="382.3" font-size="12.4" text-anchor="middle" font-family="Liberation Sans, sans-serif" fill="#111">0</text><text x="616.6" y="382.3" font-size="12.4" text-anchor="middle" font-family="Liberation Sans, sans-serif" fill="#111">2</text><text x="644" y="382.3" font-size="12.4" text-anchor="middle" font-family="Liberation Sans, sans-serif" fill="#111">4</text><text x="671.5" y="382.3" font-size="12.4" text-anchor="middle" font-family="Liberation Sans, sans-serif" fill="#111">6</text><text x="699" y="382.3" font-size="12.4" text-anchor="middle" font-family="Liberation Sans, sans-serif" fill="#111">8</text><text x="543.2" y="362" font-size="12.4" text-anchor="middle" font-family="Liberation Sans, sans-serif" fill="#111">Sum(10K)</text><text x="650" y="362" font-size="12.4" text-anchor="middle" font-family="Liberation Sans, sans-serif" fill="#111">Median(K)</text><rect x="571.2" y="167.0" width="17" height="16.6" fill="#d64c2b"/><text x="593.6" y="179.5" font-size="12.4" font-family="Liberation Sans, sans-serif" fill="#111">Acidobacteria</text><rect x="571.2" y="189.0" width="17" height="16.6" fill="#efcb76"/><text x="593.6" y="201.5" font-size="12.4" font-family="Liberation Sans, sans-serif" fill="#111">Gemmatimonadetes</text><rect x="571.2" y="211.1" width="17" height="16.6" fill="#0081b5"/><text x="593.6" y="223.6" font-size="12.4" font-family="Liberation Sans, sans-serif" fill="#111">Proteobacteria</text><rect x="571.2" y="233.1" width="17" height="16.6" fill="#e08663"/><text x="593.6" y="245.6" font-size="12.4" font-family="Liberation Sans, sans-serif" fill="#111">Planctomycetes</text><rect x="571.2" y="255.1" width="17" height="16.6" fill="#a5714a"/><text x="593.6" y="267.6" font-size="12.4" font-family="Liberation Sans, sans-serif" fill="#111">Bacteroidetes</text><rect x="571.2" y="277.1" width="17" height="16.6" fill="#7fa980"/><text x="593.6" y="289.6" font-size="12.4" font-family="Liberation Sans, sans-serif" fill="#111">Verrucomicrobia</text><rect x="571.2" y="299.2" width="17" height="16.6" fill="#eec8c9"/><text x="593.6" y="311.7" font-size="12.4" font-family="Liberation Sans, sans-serif" fill="#111">Nitrospirae</text><path d="M594 180.3 h75.1" stroke="#5cf05c" stroke-width="1"/><path d="M594 202.3 h111.6" stroke="#5cf05c" stroke-width="1"/><path d="M594 224.4 h80.6" stroke="#5cf05c" stroke-width="1"/><path d="M594 246.4 h87.5" stroke="#5cf05c" stroke-width="1"/><path d="M594 268.4 h75.8" stroke="#5cf05c" stroke-width="1"/><path d="M594 290.4 h89.6" stroke="#5cf05c" stroke-width="1"/><path d="M594 312.5 h60.0" stroke="#5cf05c" stroke-width="1"/><rect x="594.2" y="168.5" width="131.4" height="163.0" fill="none" stroke="#5cf05c" stroke-width="1"/><path d="M725.6 250.0 H737 M659.9000000000001 331.5 V342" stroke="#5cf05c" stroke-width="1"/><rect x="592.0" y="166.3" width="4.4" height="4.4" fill="#fff" stroke="#5cf05c" stroke-width="1"/><rect x="657.7" y="166.3" width="4.4" height="4.4" fill="#fff" stroke="#5cf05c" stroke-width="1"/><rect x="723.4" y="166.3" width="4.4" height="4.4" fill="#fff" stroke="#5cf05c" stroke-width="1"/><rect x="592.0" y="247.8" width="4.4" height="4.4" fill="#fff" stroke="#5cf05c" stroke-width="1"/><rect x="723.4" y="247.8" width="4.4" height="4.4" fill="#fff" stroke="#5cf05c" stroke-width="1"/><rect x="592.0" y="329.3" width="4.4" height="4.4" fill="#fff" stroke="#5cf05c" stroke-width="1"/><rect x="657.7" y="329.3" width="4.4" height="4.4" fill="#fff" stroke="#5cf05c" stroke-width="1"/><rect x="723.4" y="329.3" width="4.4" height="4.4" fill="#fff" stroke="#5cf05c" stroke-width="1"/><rect x="590.8" y="182.5" width="6.8" height="6.8" fill="#fff" stroke="#5cf05c" stroke-width="1"/><rect x="722.4" y="311.6" width="6.8" height="6.8" fill="#fff" stroke="#5cf05c" stroke-width="1"/><rect x="658.7" y="248.8" width="2.4" height="2.4" fill="#5cf05c"/><circle cx="737.4" cy="250.0" r="2.8" fill="#3fe03f"/><rect x="657.7" y="340.4" width="4.6" height="4.6" fill="#3fe03f"/></svg>
<div class="a" style="left:769px;top:82px;width:40.5px;height:625px;background:#f0f0f0;border-right:1px solid #c0c0c0;border-left:1.5px solid #d6d6d6"></div>
<div class="a" style="left:769px;top:82px;width:40.5px;height:11.5px;background:#dcdcdc;border-right:1px solid #c0c0c0;border-left:1.5px solid #cacaca"></div>
<svg style="left:0;top:0;" width="1" height="1"><path d="M799.2 85.3 L797 87.6 L799.2 89.9 M803 85.3 L800.8 87.6 L803 89.9" fill="none" stroke="#333" stroke-width="1.2"/></svg>
<div class="a" style="left:779px;top:97.5px;width:20px;height:3.5px;background:repeating-linear-gradient(90deg,#cfcfcf 0 1px,transparent 1px 2px)"></div>
<div class="a" style="left:779px;top:166.5px;width:20px;height:3.5px;background:repeating-linear-gradient(90deg,#cfcfcf 0 1px,transparent 1px 2px)"></div>
<div class="a" style="left:779px;top:263px;width:20px;height:3.5px;background:repeating-linear-gradient(90deg,#cfcfcf 0 1px,transparent 1px 2px)"></div>
<div class="a" style="left:779px;top:359.5px;width:20px;height:3.5px;background:repeating-linear-gradient(90deg,#cfcfcf 0 1px,transparent 1px 2px)"></div>
<div class="a" style="left:779px;top:427px;width:20px;height:3.5px;background:repeating-linear-gradient(90deg,#cfcfcf 0 1px,transparent 1px 2px)"></div>
<div class="a" style="left:779px;top:523.5px;width:20px;height:3.5px;background:repeating-linear-gradient(90deg,#cfcfcf 0 1px,transparent 1px 2px)"></div>
<div class="a" style="left:779px;top:596px;width:20px;height:3.5px;background:repeating-linear-gradient(90deg,#cfcfcf 0 1px,transparent 1px 2px)"></div>
<div class="hsep" style="left:771px;top:162px;width:38px;background:#d2d2d2"></div>
<div class="hsep" style="left:771px;top:258.7px;width:38px;background:#d2d2d2"></div>
<div class="hsep" style="left:771px;top:354.5px;width:38px;background:#d2d2d2"></div>
<div class="hsep" style="left:771px;top:423px;width:38px;background:#d2d2d2"></div>
<div class="hsep" style="left:771px;top:519px;width:38px;background:#d2d2d2"></div>
<div class="hsep" style="left:771px;top:587.5px;width:38px;background:#d2d2d2"></div>
<div class="hsep" style="left:771px;top:656.4px;width:38px;background:#d2d2d2"></div>
<svg style="left:0;top:0;" width="1" height="1"><path d="M781 118.8 Q781.3 116 785 115.8 Q789.6 116.3 789.3 114 Q787.8 111.2 791 110.6 Q799.6 109.4 800 117 Q799.8 124.6 790 124.7 Q781 124.3 781 118.8 Z" fill="#3c3c3c"/><circle cx="785.7" cy="119.9" r="1.65" fill="#f0f0f0"/><circle cx="790.2" cy="121.2" r="1.65" fill="#f0f0f0"/><circle cx="794" cy="120.6" r="1.35" fill="#f0f0f0"/><circle cx="796.9" cy="118.1" r="1.2" fill="#f0f0f0"/><circle cx="796" cy="115.2" r="1.15" fill="#f0f0f0"/><defs><linearGradient id="cg1" x1="0" y1="0" x2="1" y2="0.9"><stop offset="0" stop-color="#1e1e1e"/><stop offset="0.45" stop-color="#777"/><stop offset="1" stop-color="#e4e4e4"/></linearGradient></defs><path d="M783.2 138 Q797.5 139.5 798.6 152.6 H783.2 Z" fill="url(#cg1)" stroke="#555" stroke-width="0.9"/><rect x="782" y="180.6" width="16" height="10.8" rx="0.8" fill="#666"/><rect x="783" y="181.6" width="4.1" height="4" fill="#c6c6c6"/><rect x="788" y="181.6" width="4.1" height="4" fill="#484848"/><rect x="793" y="181.6" width="4.1" height="4" fill="#d2d2d2"/><rect x="783" y="186.5" width="4.1" height="4" fill="#d6d6d6"/><rect x="788" y="186.5" width="4.1" height="4" fill="#999"/><rect x="793" y="186.5" width="4.1" height="4" fill="#b2b2b2"/><rect x="786.1" y="217" width="8.7" height="5.8" fill="#3c3c3c"/><path d="M788.6 217.5 L785.3 211.5 M790.4 217.5 L789.7 209.5 M792.4 217.5 L795.2 211.2" stroke="#3c3c3c" stroke-width="1.3" fill="none"/><ellipse cx="784.4" cy="209.8" rx="1.7" ry="3.4" transform="rotate(-24 784.4 209.8)" fill="#3c3c3c"/><path d="M788.3 206.2 h2.6 v1.6 l0.5 2.4 h-3.6 l0.5 -2.4 z" fill="#3c3c3c"/><path d="M788.8 204.3 h1.6 v2 h-1.6z" fill="#3c3c3c"/><path d="M793.2 210.6 Q795.5 206.3 799.3 209.6 Q798.6 211.6 796.2 212.2 Z" fill="#3c3c3c"/><circle cx="790.7" cy="236.2" r="3.5" fill="#3c3c3c"/><circle cx="785.9" cy="241.8" r="3.4" fill="#3c3c3c"/><circle cx="795.5" cy="241.8" r="3.4" fill="#3c3c3c"/><path d="M789.9 238 H791.5 L791.8 244.5 Q792.2 247 794 247.7 H787.4 Q789.2 247 789.6 244.5 Z" fill="#3c3c3c"/><rect x="785.6" y="247.6" width="10.6" height="1.1" fill="#3c3c3c"/><path d="M782.1 276.5 H799.1" stroke="#3c3c3c" stroke-width="1"/><path d="M782.1 281 H799.1" stroke="#3c3c3c" stroke-width="1.8"/><path d="M782.1 286.5 H799.1" stroke="#3c3c3c" stroke-width="3"/><defs><linearGradient id="cg2" x1="0" x2="1"><stop offset="0" stop-color="#2a2a2a"/><stop offset="1" stop-color="#e6e6e6"/></linearGradient></defs><rect x="782.6" y="304.5" width="16.5" height="11" fill="url(#cg2)" stroke="#3c3c3c" stroke-width="1"/><circle cx="787.8000000000001" cy="335.2" r="5.8" fill="#3c3c3c"/><circle cx="793.2" cy="340.6" r="5.6" fill="#b4b4b4" fill-opacity="0.85" stroke="#3c3c3c" stroke-width="1.1"/><circle cx="791.1" cy="378.5" r="5.3" fill="#3c3c3c"/><circle cx="791.1" cy="378.5" r="8" fill="none" stroke="#3c3c3c" stroke-width="1" stroke-dasharray="1.2 1.2"/><rect x="787.1" y="399.0" width="12" height="12.5" fill="#fafafa" stroke="#3c3c3c" stroke-width="1.2"/><rect x="783.1" y="407.0" width="6.5" height="6.5" fill="#fafafa" stroke="#3c3c3c" stroke-width="1.2"/><path d="M785.6 410.5 h4 M787.6 408.5 v4" stroke="#3c3c3c" stroke-width="1"/><path d="M790.6 439.5 L799.1 445.0 L790.6 450.5 L782.1 445.0 Z" fill="#3c3c3c"/><path d="M783.1 449.7 L790.6 454.5 L798.1 449.7" fill="none" stroke="#3c3c3c" stroke-width="1.8"/><path d="M789.1 469.5 H783.1 V483 H796.6 V476.5" fill="none" stroke="#3c3c3c" stroke-width="1.6"/><path d="M790.1 475.5 L798.1 467.5 M792.6 467 H798.6 V473" fill="none" stroke="#3c3c3c" stroke-width="1.6"/><rect x="782.6" y="494.8" width="10" height="11" fill="#f0f0f0" stroke="#3c3c3c" stroke-width="1.1"/><rect x="787.1" y="501.8" width="12" height="9" fill="#f0f0f0" stroke="#3c3c3c" stroke-width="1.1"/><rect x="785.1" y="538.0" width="11.5" height="11.5" fill="none" stroke="#3c3c3c" stroke-width="1.1" stroke-dasharray="2.2 1.3"/><rect x="783.6" y="536.5" width="3.2" height="3.2" fill="#3c3c3c"/><rect x="783.6" y="547.8" width="3.2" height="3.2" fill="#3c3c3c"/><rect x="794.9" y="536.5" width="3.2" height="3.2" fill="#3c3c3c"/><rect x="794.9" y="547.8" width="3.2" height="3.2" fill="#3c3c3c"/><circle cx="790.9" cy="543.8" r="0.9" fill="#3c3c3c"/><path d="M783.6 562.5 V580.5" stroke="#3c3c3c" stroke-width="1.1"/><rect x="785.6" y="565.0" width="7.5" height="5.5" fill="#3c3c3c"/><rect x="785.6" y="572.5" width="12.5" height="5.5" fill="#3c3c3c"/><rect x="783" y="605" width="9.2" height="8.8" fill="#3c3c3c"/><rect x="788" y="609.8" width="10" height="9.7" fill="#3c3c3c"/><rect x="788" y="609.8" width="4.2" height="4" fill="#3c3c3c" stroke="#cfcfcf" stroke-width="0.9"/><rect x="782.3" y="631.5" width="13.3" height="13" rx="1" fill="#f0f0f0" stroke="#3c3c3c" stroke-width="1"/><rect x="784.6" y="633.8" width="13.3" height="13" rx="1" fill="#f4f4f4" stroke="#3c3c3c" stroke-width="1.1"/><path d="M791 634 h4 v7.2 l-2 -1.6 l-2 1.6 z" fill="#3c3c3c"/></svg>
<div class="a" style="left:810.5px;top:82px;width:249px;height:624.5px;background:#f0f0f0;border-right:1.5px solid #9a9a9a;border-bottom:1.5px solid #9a9a9a;border-left:1px solid #cfcfcf"></div>
<div class="a" style="left:810.5px;top:82px;width:248px;height:11.5px;background:#dcdcdc;"></div>
<svg style="left:0;top:0;" width="1" height="1"><path d="M1046 85.3 L1048.2 87.6 L1046 89.9 M1049.8 85.3 L1052 87.6 L1049.8 89.9" fill="none" stroke="#333" stroke-width="1.2"/></svg>
<div class="hsep" style="left:769.5px;top:93px;width:289.5px;background:#9a9a9a"></div>
<div class="a" style="left:811.5px;top:94px;width:246.5px;height:27px;background:#dcdcdc;"></div>
<div class="a" style="left:811.5px;top:94px;width:42.5px;height:27.5px;background:#f0f0f0;"></div>
<div class="t ui" style="left:820.5px;top:101px;font-size:12.3px;color:#222">属性</div>
<svg style="left:0;top:0;" width="1" height="1"><path d="M820 122.3 H837.5" stroke="#9a9a9a" stroke-width="1"/><path d="M820 123.8 H837.5" stroke="#d0d0d0" stroke-width="1"/></svg>
<div class="a" style="left:1046px;top:121.5px;width:12px;height:584px;background:#f4f4f4;"></div>
<svg style="left:0;top:0" width="1" height="1"><path d="M1048.3 128.7 L1051.8 125.3 L1055.3 128.7" fill="none" stroke="#808080" stroke-width="1.1"/></svg>
<svg style="left:0;top:0" width="1" height="1"><path d="M1048.3 696.3 L1051.8 699.7 L1055.3 696.3" fill="none" stroke="#808080" stroke-width="1.1"/></svg>
<div class="a" style="left:1047.5px;top:280px;width:9px;height:412.5px;background:#dadada;border-radius:4.5px"></div>
<div class="a" style="left:820.5px;top:134.5px;width:17.5px;height:17.5px;background:#fdfdfd;border:1px solid #666"></div>
<svg style="left:0;top:0;" width="1" height="1"><rect x="825.3" y="139.3" width="7.6" height="7.6" fill="#ddd" stroke="#555" stroke-width="1.3"/><path d="M821.5 151 L837 135.5" stroke="#e8121c" stroke-width="1.8"/></svg>
<div class="t sf" style="left:850px;top:137px;font-size:12px;"><span class="ul">描边</span></div>
<div class="box" style="left:910.5px;top:133px;width:69px;height:20px;"></div>
<div class="vsep" style="left:928.5px;top:134px;height:18px;background:#e2e2e2"></div>
<div class="vsep" style="left:961px;top:134px;height:18px;background:#e2e2e2"></div>
<svg style="left:0;top:0" width="1" height="1"><path d="M916.5 140.4 L920.0 136.9 L923.5 140.4" fill="none" stroke="#333" stroke-width="1.3"/></svg><svg style="left:0;top:0" width="1" height="1"><path d="M916.5 145.9 L920.0 149.4 L923.5 145.9" fill="none" stroke="#333" stroke-width="1.3"/></svg>
<svg style="left:0;top:0" width="1" height="1"><path d="M967.0 141.8 L970.3 145.2 L973.5 141.8" fill="none" stroke="#333" stroke-width="1.4"/></svg>
<div class="a" style="left:820.5px;top:164px;width:17.5px;height:16.5px;border:1px solid #666;background:#e6e6e6 repeating-conic-gradient(#d0d0d0 0 25%,#f2f2f2 0 50%) 0 0/6px 6px"></div>
<div class="t sf" style="left:850px;top:165px;font-size:12px;"><span class="ul">不透明度</span></div>
<div class="box" style="left:910.5px;top:161.5px;width:69px;height:20px;"></div>
<div class="vsep" style="left:961px;top:162.5px;height:18px;background:#e2e2e2"></div>
<div class="t mono" style="left:914.5px;top:165.5px;font-size:11px;letter-spacing:-0.6px;color:#444">100%</div>
<svg style="left:0;top:0" width="1" height="1"><path d="M968.7 167.8 L972.3 171.5 L968.7 175.2" fill="none" stroke="#333" stroke-width="1.4"/></svg>
<div class="t ar" style="left:827px;top:197px;font-size:14.5px;font-style:italic;color:#333;letter-spacing:-0.6px">fx</div>
<svg style="left:0;top:0;" width="1" height="1"><path d="M838.5 208 h3 l-1.5 1.8z" fill="#333"/></svg>
<svg style="left:0;top:0;" width="1" height="1"><circle cx="1027.5" cy="229" r="1.7" fill="#333"/><circle cx="1033" cy="229" r="1.7" fill="#333"/><circle cx="1038.5" cy="229" r="1.7" fill="#333"/></svg>
<div class="hsep" style="left:811.5px;top:238px;width:234.5px;background:#d9d9d9"></div>
<div class="t sf" style="left:820.5px;top:250px;font-size:12px;color:#555">字符</div>
<div class="box" style="left:820.5px;top:273.5px;width:217.5px;height:19px;"></div>
<div class="vsep" style="left:1019.5px;top:274.5px;height:17px;background:#e2e2e2"></div>
<svg style="left:0;top:0;" width="1" height="1"><circle cx="826.8" cy="281.8" r="3.5" fill="none" stroke="#333" stroke-width="1.3"/><path d="M829.3 284.5 L832.6 287.8" stroke="#333" stroke-width="1.4"/></svg>
<svg style="left:0;top:0" width="1" height="1"><path d="M834.2 283.0 L837.0 286.0 L839.8 283.0" fill="none" stroke="#333" stroke-width="1.4"/></svg>
<div class="t mono" style="left:847px;top:278px;font-size:11px;color:#333;letter-spacing:-0.4px">Arial</div>
<svg style="left:0;top:0" width="1" height="1"><path d="M1025.5 281.8 L1028.8 285.2 L1032.0 281.8" fill="none" stroke="#333" stroke-width="1.4"/></svg>
<div class="box" style="left:820.5px;top:298.5px;width:217.5px;height:20px;"></div>
<div class="vsep" style="left:1019.5px;top:299.5px;height:18px;background:#e2e2e2"></div>
<div class="t mono" style="left:827px;top:304px;font-size:11px;color:#333;letter-spacing:-0.4px">Regular</div>
<svg style="left:0;top:0" width="1" height="1"><path d="M1025.5 307.3 L1028.8 310.7 L1032.0 307.3" fill="none" stroke="#333" stroke-width="1.4"/></svg>
<div class="t sf" style="left:819.8px;top:330.3px;font-size:12.5px;font-weight:bold;color:#333">T</div>
<div class="t sf" style="left:826.8px;top:324.2px;font-size:19.5px;font-weight:bold;color:#333">T</div>
<div class="box" style="left:841.5px;top:324px;width:80px;height:20px;"></div>
<div class="vsep" style="left:859.5px;top:325px;height:18px;background:#e2e2e2"></div>
<div class="vsep" style="left:903.5px;top:325px;height:18px;background:#e2e2e2"></div>
<svg style="left:0;top:0" width="1" height="1"><path d="M847.5 331.2 L851.0 327.8 L854.5 331.2" fill="none" stroke="#333" stroke-width="1.3"/></svg><svg style="left:0;top:0" width="1" height="1"><path d="M847.5 336.8 L851.0 340.2 L854.5 336.8" fill="none" stroke="#333" stroke-width="1.3"/></svg>
<svg style="left:0;top:0" width="1" height="1"><path d="M909.2 332.8 L912.5 336.2 L915.8 332.8" fill="none" stroke="#333" stroke-width="1.4"/></svg>
<div class="t mono" style="left:863px;top:328.8px;font-size:11px;color:#444;letter-spacing:-0.6px">11 pt</div>
<div class="t ar" style="left:943.5px;top:324.6px;font-size:9.5px;color:#333">A</div>
<div class="t ar" style="left:943.5px;top:334px;font-size:9.5px;color:#333">A</div>
<svg style="left:0;top:0;" width="1" height="1"><path d="M939.3 329.5 V339.5 M937.3 331.8 L939.3 329.3 L941.3 331.8 M937.3 337.2 L939.3 339.7 L941.3 337.2" fill="none" stroke="#333" stroke-width="1.1"/><path d="M943.5 333 H950.5 M943.5 342.7 H950.5" stroke="#333" stroke-width="0.9"/></svg>
<div class="box" style="left:957.5px;top:324px;width:80.5px;height:20px;"></div>
<div class="vsep" style="left:975.5px;top:325px;height:18px;background:#e2e2e2"></div>
<div class="vsep" style="left:1019.5px;top:325px;height:18px;background:#e2e2e2"></div>
<svg style="left:0;top:0" width="1" height="1"><path d="M963.5 331.2 L967.0 327.8 L970.5 331.2" fill="none" stroke="#333" stroke-width="1.3"/></svg><svg style="left:0;top:0" width="1" height="1"><path d="M963.5 336.8 L967.0 340.2 L970.5 336.8" fill="none" stroke="#333" stroke-width="1.3"/></svg>
<svg style="left:0;top:0" width="1" height="1"><path d="M1025.5 332.8 L1028.8 336.2 L1032.0 332.8" fill="none" stroke="#333" stroke-width="1.4"/></svg>
<div class="t mono" style="left:979px;top:328.8px;font-size:11px;color:#444;letter-spacing:-0.6px;width:40px;overflow:hidden">19.5 pt</div>
<div class="t ar" style="left:819.8px;top:351.5px;font-size:12.5px;color:#333;letter-spacing:-1.5px">V/A</div>
<svg style="left:0;top:0;" width="1" height="1"><path d="M830 366 H837.5 M832.3 364 L830 366 L832.3 368" fill="none" stroke="#333" stroke-width="1.1"/></svg>
<div class="box" style="left:841.5px;top:350px;width:80px;height:20px;"></div>
<div class="vsep" style="left:859.5px;top:351px;height:18px;background:#e2e2e2"></div>
<div class="vsep" style="left:903.5px;top:351px;height:18px;background:#e2e2e2"></div>
<svg style="left:0;top:0" width="1" height="1"><path d="M847.5 357.2 L851.0 353.8 L854.5 357.2" fill="none" stroke="#333" stroke-width="1.3"/></svg><svg style="left:0;top:0" width="1" height="1"><path d="M847.5 362.8 L851.0 366.2 L854.5 362.8" fill="none" stroke="#333" stroke-width="1.3"/></svg>
<svg style="left:0;top:0" width="1" height="1"><path d="M909.2 358.8 L912.5 362.2 L915.8 358.8" fill="none" stroke="#333" stroke-width="1.4"/></svg>
<div class="t sf" style="left:863px;top:354px;font-size:11.5px;color:#555">自动</div>
<div class="a" style="left:936.5px;top:351.5px;width:18px;height:10.5px;background:#333;"></div>
<div class="t ar" style="left:937.6px;top:351.6px;font-size:11px;color:#fff;letter-spacing:-0.9px;font-weight:bold">VA</div>
<svg style="left:0;top:0;" width="1" height="1"><path d="M937 366 H953.5 M939 364 L937 366 L939 368 M951.5 364 L953.5 366 L951.5 368" fill="none" stroke="#333" stroke-width="1.1"/></svg>
<div class="box" style="left:957.5px;top:350px;width:80.5px;height:20px;"></div>
<div class="vsep" style="left:975.5px;top:351px;height:18px;background:#e2e2e2"></div>
<div class="vsep" style="left:1019.5px;top:351px;height:18px;background:#e2e2e2"></div>
<svg style="left:0;top:0" width="1" height="1"><path d="M963.5 357.2 L967.0 353.8 L970.5 357.2" fill="none" stroke="#333" stroke-width="1.3"/></svg><svg style="left:0;top:0" width="1" height="1"><path d="M963.5 362.8 L967.0 366.2 L970.5 362.8" fill="none" stroke="#333" stroke-width="1.3"/></svg>
<svg style="left:0;top:0" width="1" height="1"><path d="M1025.5 358.8 L1028.8 362.2 L1032.0 358.8" fill="none" stroke="#333" stroke-width="1.4"/></svg>
<div class="t mono" style="left:979px;top:355.5px;font-size:11px;color:#444">0</div>
<div class="a" style="left:979.5px;top:357px;width:47px;height:15px;background:#fff;border:1px solid #8a8a8a;box-shadow:1px 1px 2px rgba(0,0,0,.3)"></div>
<div class="t ui" style="left:983px;top:359.5px;font-size:10px;color:#333">设置行距</div>
<svg style="left:0;top:0;" width="1" height="1"><circle cx="1027.5" cy="384" r="1.7" fill="#333"/><circle cx="1033" cy="384" r="1.7" fill="#333"/><circle cx="1038.5" cy="384" r="1.7" fill="#333"/></svg>
<div class="hsep" style="left:811.5px;top:393.5px;width:234.5px;background:#d9d9d9"></div>
<div class="t sf" style="left:820.5px;top:405.5px;font-size:12px;color:#555">段落</div>
<div class="a" style="left:820px;top:427.5px;width:26px;height:25.5px;background:#b9b9b9;border-radius:3px"></div>
<svg style="left:0;top:0;" width="1" height="1"><path d="M825.5 434.5 h15.0 M825.5 437.5 h10.0 M825.5 440.5 h15.0 M825.5 443.5 h10.0 M825.5 446.5 h15.0 " stroke="#333" stroke-width="1.0" fill="none"/><path d="M856.5 434.5 h15.0 M859.0 437.5 h10.0 M856.5 440.5 h15.0 M859.0 443.5 h10.0 M856.5 446.5 h15.0 " stroke="#333" stroke-width="1.0" fill="none"/><path d="M886.5 434.5 h15.0 M891.5 437.5 h10.0 M886.5 440.5 h15.0 M891.5 443.5 h10.0 M886.5 446.5 h15.0 " stroke="#333" stroke-width="1.0" fill="none"/><path d="M918.5 434.5 h15.0 M918.5 437.5 h15.0 M918.5 440.5 h15.0 M918.5 443.5 h15.0 M918.5 446.5 h9.0 " stroke="#333" stroke-width="1.0" fill="none"/><path d="M948.5 434.5 h15.0 M948.5 437.5 h15.0 M948.5 440.5 h15.0 M948.5 443.5 h15.0 M951.5 446.5 h9.0 " stroke="#333" stroke-width="1.0" fill="none"/><path d="M979.5 434.5 h15.0 M979.5 437.5 h15.0 M979.5 440.5 h15.0 M979.5 443.5 h15.0 M985.5 446.5 h9.0 " stroke="#333" stroke-width="1.0" fill="none"/><path d="M1009.5 434.5 h15.0 M1009.5 437.5 h15.0 M1009.5 440.5 h15.0 M1009.5 443.5 h15.0 M1009.5 446.5 h15.0 " stroke="#333" stroke-width="1.0" fill="none"/></svg>
<svg style="left:0;top:0;" width="1" height="1"><circle cx="1027.5" cy="466.2" r="1.7" fill="#333"/><circle cx="1033" cy="466.2" r="1.7" fill="#333"/><circle cx="1038.5" cy="466.2" r="1.7" fill="#333"/></svg>
<div class="hsep" style="left:811.5px;top:476px;width:234.5px;background:#d9d9d9"></div>
<div class="t sf" style="left:820.5px;top:482.5px;font-size:12px;color:#555">区域文字</div>
<div class="a" style="left:820px;top:505px;width:26px;height:25.5px;background:#b9b9b9;border-radius:3px"></div>
<svg style="left:0;top:0;" width="1" height="1"><path d="M826.0 511.5 h14 M826.0 514.5 h14 M826.0 517.5 h14" stroke="#333" stroke-width="1.3" fill="none"/><path d="M857.0 514.5 h14 M857.0 517.5 h14 M857.0 520.5 h14" stroke="#333" stroke-width="1.2" fill="none"/><path d="M887.7 518.5 h14 M887.7 521.5 h14 M887.7 524.5 h14" stroke="#333" stroke-width="1.2" fill="none"/><path d="M918.6 511.5 h14 M918.6 517.5 h14 M918.6 523.5 h14" stroke="#333" stroke-width="1.2" fill="none"/></svg>
<svg style="left:0;top:0;" width="1" height="1"><circle cx="1027.5" cy="544" r="1.7" fill="#333"/><circle cx="1033" cy="544" r="1.7" fill="#333"/><circle cx="1038.5" cy="544" r="1.7" fill="#333"/></svg>
<div class="hsep" style="left:811.5px;top:553.5px;width:234.5px;background:#d9d9d9"></div>
<div class="t sf" style="left:820.5px;top:565.5px;font-size:12px;color:#555">对齐</div>
<svg style="left:0;top:0;" width="1" height="1"><path d="M827.5 596.5 H834 L838 600.5 V606 H827.5 Z" fill="#d4d4d4" stroke="#3c3c3c" stroke-width="1"/><path d="M823 596.5 H827.5 M827.5 592 V596.5" stroke="#3c3c3c" stroke-width="1"/><path d="M840.5 599.5 l2.8 2.8 l2.8 -2.8" fill="none" stroke="#3c3c3c" stroke-width="1.2"/><path d="M861.5 592 V608.5" stroke="#3c3c3c" stroke-width="1.1"/><rect x="863.5" y="594.5" width="7" height="5" fill="#3c3c3c"/><rect x="863.5" y="601.5" width="12" height="5" fill="#3c3c3c"/><path d="M897.8 592 V608.5" stroke="#3c3c3c" stroke-width="1.1"/><rect x="894.3" y="594.5" width="7" height="5" fill="#3c3c3c"/><rect x="891.8" y="601.5" width="12" height="5" fill="#3c3c3c"/><path d="M935.5 592 V608.5" stroke="#3c3c3c" stroke-width="1.1"/><rect x="926.5" y="594.5" width="7" height="5" fill="#3c3c3c"/><rect x="921.5" y="601.5" width="12" height="5" fill="#3c3c3c"/><path d="M949.5 592.5 H966.5" stroke="#3c3c3c" stroke-width="1.1"/><rect x="952.5" y="594.5" width="5" height="12" fill="#3c3c3c"/><rect x="959.5" y="594.5" width="5" height="7" fill="#3c3c3c"/><path d="M979.4 600 H996.4" stroke="#3c3c3c" stroke-width="1.1"/><rect x="982.4" y="594" width="5" height="12" fill="#3c3c3c"/><rect x="989.4" y="596.5" width="5" height="7" fill="#3c3c3c"/><path d="M1009.0 608 H1026.0" stroke="#3c3c3c" stroke-width="1.1"/><rect x="1012.0" y="593.5" width="5" height="12.5" fill="#3c3c3c"/><rect x="1019.0" y="598.5" width="5" height="7.5" fill="#3c3c3c"/></svg>
<svg style="left:0;top:0;" width="1" height="1"><circle cx="1027.5" cy="626.5" r="1.7" fill="#333"/><circle cx="1033" cy="626.5" r="1.7" fill="#333"/><circle cx="1038.5" cy="626.5" r="1.7" fill="#333"/></svg>
<div class="hsep" style="left:811.5px;top:636px;width:234.5px;background:#d9d9d9"></div>
<div class="t sf" style="left:820.5px;top:652.5px;font-size:12px;color:#555">快速操作</div>
<div class="box" style="left:820.5px;top:675px;width:107px;height:20px;background:#f6f6f6;border-color:#c8c8c8"></div>
<div class="box" style="left:938px;top:675px;width:107px;height:20px;background:#f6f6f6;border-color:#c8c8c8"></div>
<div class="t sf" style="left:850px;top:679px;font-size:11.5px;color:#444;letter-spacing:0.3px">创建轮廓</div>
<div class="t sf" style="left:977px;top:679px;font-size:11.5px;color:#444;letter-spacing:0.3px">排列</div>
<svg style="left:0;top:0;" width="1" height="1"><g fill="#fff" stroke="#c4c4c4" stroke-width="0.8"><ellipse cx="886" cy="674" rx="13" ry="10.5"/><path d="M878.5 682 l-2.5 5.5 l7 -3.5z"/></g><circle cx="882" cy="671" r="1.4" fill="#d0d0d0"/><circle cx="890.5" cy="671" r="1.4" fill="#d0d0d0"/><g fill="#fff" stroke="#bdbdbd" stroke-width="0.8"><ellipse cx="897.5" cy="683" rx="11" ry="9"/><path d="M903.5 690 l3 4.5 l-7 -2.8z"/></g><circle cx="894" cy="680.5" r="1.2" fill="#cfcfcf"/><circle cx="901.2" cy="680.5" r="1.2" fill="#cfcfcf"/></svg>
<div class="t ui" style="left:914.5px;top:665.3px;font-size:29px;font-family:'Noto Sans CJK SC','Liberation Sans',sans-serif;font-weight:300;color:#fff;text-shadow:1px 1px 1px #8a8a8a,0 0 1.5px #aaa;letter-spacing:-0.45px">SCIPainter</div>
</div></body></html>
